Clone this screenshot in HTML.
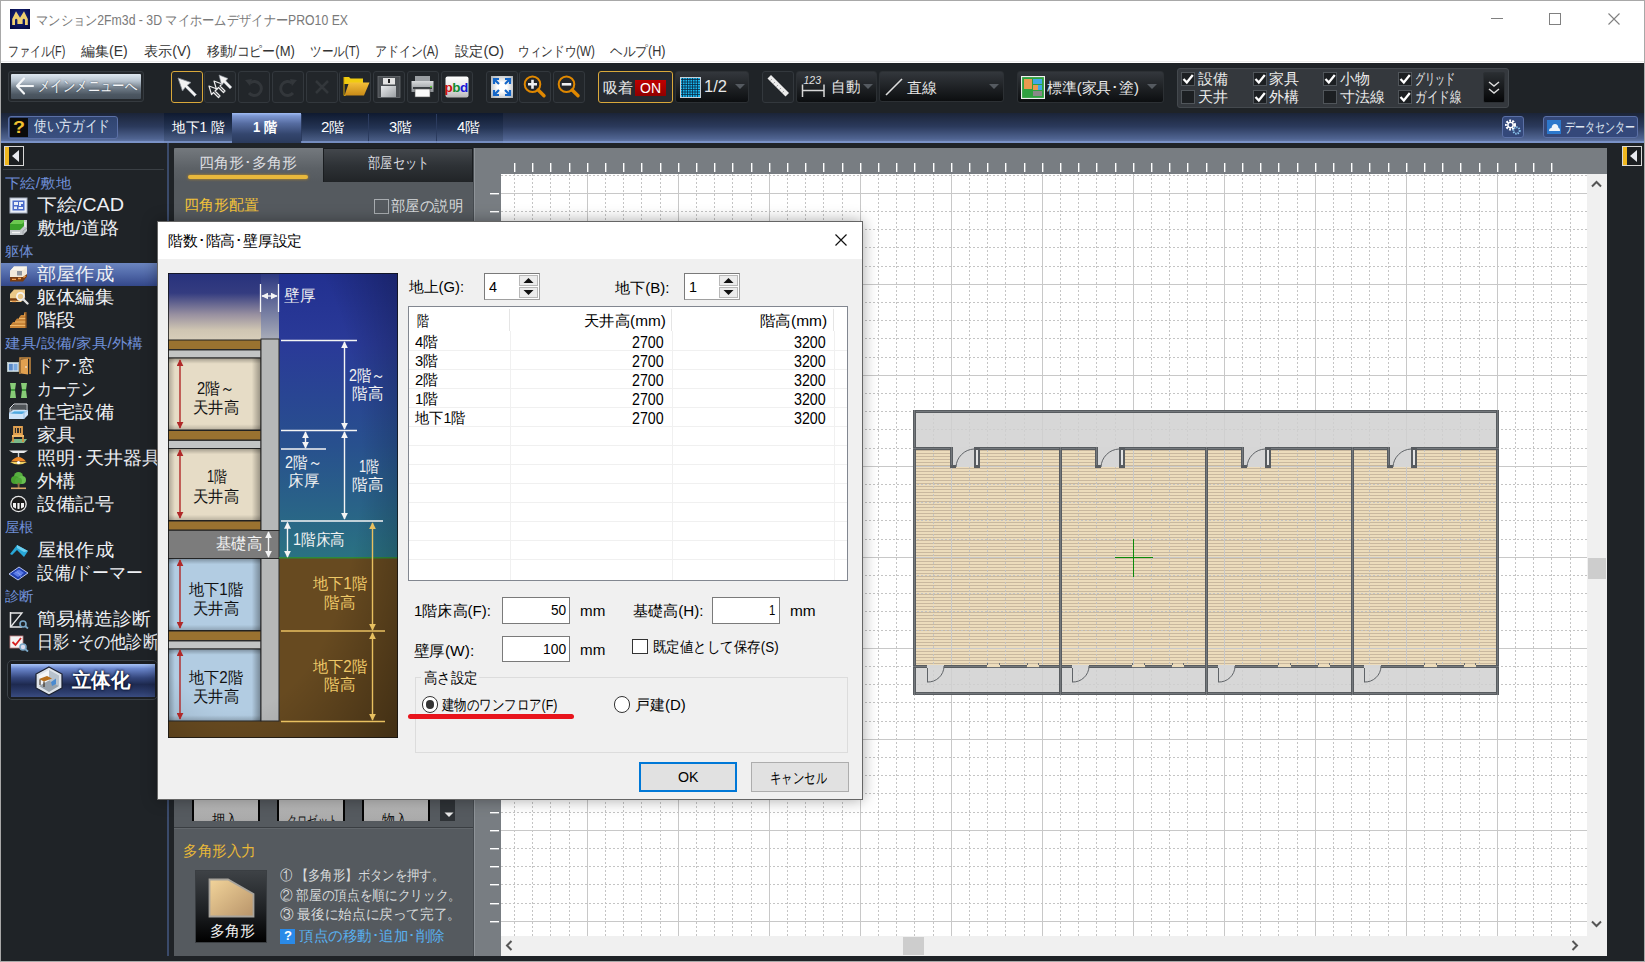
<!DOCTYPE html><html><head><meta charset="utf-8"><style>
html,body{margin:0;padding:0;}
body{width:1645px;height:962px;position:relative;overflow:hidden;background:#1f2327;font-family:"Liberation Sans",sans-serif;}
body div, body svg{position:absolute;box-sizing:border-box;}
.f{white-space:nowrap;transform-origin:0 50%;}
</style></head><body><div style="left:0px;top:0px;width:1645px;height:63px;background:#fff;"></div>
<div style="left:1px;top:61px;width:1643px;height:1px;background:#ececec;"></div>
<svg style="left:10px;top:9px;" width="20" height="20" viewBox="0 0 20 20"><defs><radialGradient id="ig" cx="0.5" cy="0.4" r="0.7"><stop offset="0" stop-color="#1a2a90"></stop><stop offset="1" stop-color="#050a40"></stop></radialGradient></defs><rect width="20" height="20" fill="url(#ig)"></rect><path d="M2.2 16 V10 L6 2.3 L10 8.8 L14 2.3 L17.8 10 V16 H15 V10.8 Q13.8 8.6 12.6 10.8 V15 H7.4 V10.8 Q6.2 8.6 5 10.8 V16 Z" fill="#f0d070"></path></svg>
<div class="f" style="left: 35.5px; top: 12.5px; font-size: 14px; line-height: 14px; color: rgb(122, 122, 122); --w: 312px; transform: scaleX(0.8757);">マンション2Fm3d - 3D マイホームデザイナーPRO10 EX</div>
<div style="left:1491px;top:18px;width:12px;height:1px;background:#808080;"></div>
<div style="left:1549px;top:13px;width:12px;height:12px;border:1px solid #808080;"></div>
<svg style="left:1608px;top:13px;" width="12" height="12" viewBox="0 0 12 12"><path d="M0.5 0.5 L11.5 11.5 M11.5 0.5 L0.5 11.5" stroke="#808080" stroke-width="1.1"></path></svg>
<div class="f" style="left: 8.3px; top: 43.7px; font-size: 14px; line-height: 14px; color: rgb(51, 51, 51); --w: 57.4px; transform: scaleX(0.7768);">ファイル(F)</div>
<div class="f" style="left: 81.2px; top: 43.7px; font-size: 14px; line-height: 14px; color: rgb(51, 51, 51); --w: 46.8px; transform: scaleX(1.0027);">編集(E)</div>
<div class="f" style="left: 143.6px; top: 43.7px; font-size: 14px; line-height: 14px; color: rgb(51, 51, 51); --w: 47px; transform: scaleX(1.007);">表示(V)</div>
<div class="f" style="left: 206.6px; top: 43.7px; font-size: 14px; line-height: 14px; color: rgb(51, 51, 51); --w: 87.8px; transform: scaleX(0.9253);">移動/コピー(M)</div>
<div class="f" style="left: 310.4px; top: 43.7px; font-size: 14px; line-height: 14px; color: rgb(51, 51, 51); --w: 49.6px; transform: scaleX(0.8282);">ツール(T)</div>
<div class="f" style="left: 375px; top: 43.7px; font-size: 14px; line-height: 14px; color: rgb(51, 51, 51); --w: 63.6px; transform: scaleX(0.8517);">アドイン(A)</div>
<div class="f" style="left: 454.7px; top: 43.7px; font-size: 14px; line-height: 14px; color: rgb(51, 51, 51); --w: 49px; transform: scaleX(1.0162);">設定(O)</div>
<div class="f" style="left: 518px; top: 43.7px; font-size: 14px; line-height: 14px; color: rgb(51, 51, 51); --w: 77px; transform: scaleX(0.832);">ウィンドウ(W)</div>
<div class="f" style="left: 609.5px; top: 43.7px; font-size: 14px; line-height: 14px; color: rgb(51, 51, 51); --w: 55.5px; transform: scaleX(0.9034);">ヘルプ(H)</div>
<div style="left:8px;top:71px;width:136px;height:31px;border:1px solid #353a3f;border-radius:3px;background:#23272b;"></div>
<div style="left:11px;top:74px;width:130px;height:25px;background:linear-gradient(#dee7ef 0%,#b6c2ce 28%,#6e7a86 58%,#4c5762 82%,#46505a 100%);border-radius:1px;"></div>
<svg style="left:14px;top:75px;" width="21" height="23" viewBox="0 0 21 23"><path d="M19 11 H3 M10 3.5 L3 11 L10 18.5" stroke="#f4f6f8" stroke-width="2.2" fill="none" stroke-linecap="round" stroke-linejoin="round"></path></svg>
<div class="f" style="left: 37.5px; top: 78px; font-size: 15px; line-height: 15px; color: rgb(245, 247, 250); --w: 99px; text-shadow: rgb(58, 68, 80) 0px 0px 2px; transform: scaleX(0.825);">メインメニューへ</div>
<div style="left:171px;top:71px;width:32px;height:32px;border:1.5px solid #d9a83a;border-radius:3px;background:#22262a;"></div>
<div style="left:204px;top:71px;width:32px;height:32px;border:1px solid #33383d;border-radius:3px;background:#22262a;"></div>
<div style="left:238px;top:71px;width:32px;height:32px;border:1px solid #33383d;border-radius:3px;background:#22262a;"></div>
<div style="left:272px;top:71px;width:32px;height:32px;border:1px solid #33383d;border-radius:3px;background:#22262a;"></div>
<div style="left:306px;top:71px;width:32px;height:32px;border:1px solid #33383d;border-radius:3px;background:#22262a;"></div>
<div style="left:339px;top:71px;width:32px;height:32px;border:1px solid #33383d;border-radius:3px;background:#22262a;"></div>
<div style="left:373px;top:71px;width:32px;height:32px;border:1px solid #33383d;border-radius:3px;background:#22262a;"></div>
<div style="left:407px;top:71px;width:32px;height:32px;border:1px solid #33383d;border-radius:3px;background:#22262a;"></div>
<div style="left:441px;top:71px;width:32px;height:32px;border:1px solid #33383d;border-radius:3px;background:#22262a;"></div>
<svg style="left:175px;top:75px;" width="25" height="25" viewBox="0 0 25 25"><path d="M3 3 L16 7.5 L12.3 10.2 L21.5 19.5 L19.5 21.5 L10.2 12.3 L7.5 16 Z" fill="#f2f2f2" stroke="#8a9098" stroke-width="0.8" stroke-linejoin="round"></path></svg>
<svg style="left:207px;top:73px;" width="28" height="28" viewBox="0 0 28 28"><g fill="none" stroke="#eee" stroke-width="1.2" stroke-linejoin="round"><path d="M2 13 L10 16 L8 18 L13 23 L11.5 24.5 L6.5 19.5 L4.5 21.5Z"></path><path d="M7 8 L15 11 L13 13 L18 18 L16.5 19.5 L11.5 14.5 L9.5 16.5Z"></path></g><path d="M12 2 L21 5.5 L18.8 7.7 L25 14 L23 16 L16.8 9.7 L14.6 12 Z" fill="#f2f2f2" stroke="#8a9098" stroke-width="0.6"></path></svg>
<svg style="left:242px;top:75px;" width="24" height="24" viewBox="0 0 24 24"><path d="M8 8 A7 7 0 1 1 7 18" stroke="#33373b" stroke-width="3" fill="none"></path><path d="M3 5 L10 4 L8 11Z" fill="#33373b"></path></svg>
<svg style="left:276px;top:75px;" width="24" height="24" viewBox="0 0 24 24"><path d="M16 8 A7 7 0 1 0 17 18" stroke="#33373b" stroke-width="3" fill="none"></path><path d="M21 5 L14 4 L16 11Z" fill="#33373b"></path></svg>
<svg style="left:310px;top:75px;" width="24" height="24" viewBox="0 0 24 24"><path d="M6 6 L18 18 M18 6 L6 18" stroke="#33373b" stroke-width="2.5"></path></svg>
<svg style="left:343px;top:76px;" width="27" height="21" viewBox="0 0 27 21"><defs><linearGradient id="fo" x1="0" y1="0" x2="0" y2="1"><stop offset="0" stop-color="#f4c038"></stop><stop offset="1" stop-color="#c88a18"></stop></linearGradient></defs><path d="M1 1 H6 L7.5 2.5 H20 V8 H1Z" fill="#f0cc10"></path><path d="M1 1 V19.5 L3 19" stroke="#d8a800" stroke-width="1" fill="none"></path><path d="M6 6.5 H26.5 L21 19.5 H1.5Z" fill="url(#fo)"></path></svg>
<svg style="left:377px;top:76px;" width="24" height="22" viewBox="0 0 24 22"><defs><linearGradient id="dk" x1="0" y1="0" x2="1" y2="1"><stop offset="0" stop-color="#e8eaec"></stop><stop offset="1" stop-color="#9ca0a4"></stop></linearGradient></defs><rect x="1" y="0.5" width="22" height="21" fill="#4a4e52" stroke="#6a6e72" stroke-width="0.8"></rect><rect x="6" y="2" width="12" height="6.5" fill="#e4e4e4"></rect><rect x="11" y="3" width="2" height="4" fill="#222"></rect><rect x="4" y="10" width="15" height="11" fill="url(#dk)"></rect></svg>
<svg style="left:411px;top:75px;" width="24" height="23" viewBox="0 0 24 23"><defs><linearGradient id="pr" x1="0" y1="0" x2="0" y2="1"><stop offset="0" stop-color="#d8dadc"></stop><stop offset="1" stop-color="#8a8e92"></stop></linearGradient></defs><rect x="4" y="1" width="15" height="6" fill="#9a9ea2"></rect><rect x="0.5" y="6" width="22" height="11" fill="url(#pr)"></rect><rect x="2" y="12" width="19" height="2" fill="#3a3e42"></rect><rect x="4" y="14" width="15" height="8" fill="#fafafa" stroke="#555" stroke-width="0.6"></rect><rect x="19" y="11" width="2" height="1.5" fill="#6c4"></rect></svg>
<svg style="left:445px;top:76px;" width="24" height="22" viewBox="0 0 24 22"><defs><linearGradient id="pb" x1="0" y1="0" x2="0" y2="1"><stop offset="0" stop-color="#ffffff"></stop><stop offset="0.6" stop-color="#e0e0e0"></stop><stop offset="1" stop-color="#b8b8b8"></stop></linearGradient></defs><rect x="0.5" y="0.5" width="23" height="21" rx="2" fill="url(#pb)"></rect><text x="-0.5" y="15.5" font-family="Liberation Sans" font-weight="bold" font-size="13.5" fill="#d01010">p</text><text x="7.2" y="15.5" font-family="Liberation Sans" font-weight="bold" font-size="13.5" fill="#108a30">b</text><text x="15" y="15.5" font-family="Liberation Sans" font-weight="bold" font-size="13.5" fill="#1818d8">d</text></svg>
<div style="left:486px;top:71px;width:32px;height:32px;border:1px solid #33383d;border-radius:3px;background:#22262a;"></div>
<div style="left:519px;top:71px;width:32px;height:32px;border:1px solid #33383d;border-radius:3px;background:#22262a;"></div>
<div style="left:553px;top:71px;width:32px;height:32px;border:1px solid #33383d;border-radius:3px;background:#22262a;"></div>
<svg style="left:490px;top:75px;" width="24" height="24" viewBox="0 0 24 24"><defs><radialGradient id="fg" cx="0.5" cy="0.5" r="0.7"><stop offset="0.3" stop-color="#ffffff"></stop><stop offset="1" stop-color="#a8acb0"></stop></radialGradient></defs><rect x="1" y="1" width="22" height="22" fill="url(#fg)"></rect><g stroke="#1466c8" stroke-width="2.2" fill="none"><path d="M4 9 V4 H9 M4 4 L9 9"></path><path d="M15 4 H20 V9 M20 4 L15 9"></path><path d="M4 15 V20 H9 M4 20 L9 15"></path><path d="M20 15 V20 H15 M20 20 L15 15"></path></g></svg>
<svg style="left:523px;top:75px;" width="24" height="24" viewBox="0 0 24 24"><circle cx="9.5" cy="9.3" r="7.8" fill="none" stroke="#e08800" stroke-width="2"></circle><path d="M5 9.3 H14 M9.5 4.8 V13.8" stroke="#eef0f2" stroke-width="2.6"></path><path d="M15.2 15 L21 20.8" stroke="#e08800" stroke-width="3.4" stroke-linecap="round"></path></svg>
<svg style="left:557px;top:75px;" width="24" height="24" viewBox="0 0 24 24"><circle cx="9.5" cy="9.3" r="7.8" fill="none" stroke="#e08800" stroke-width="2"></circle><path d="M4.8 9.3 H14.2" stroke="#eef0f2" stroke-width="2.6"></path><path d="M15.2 15 L21 20.8" stroke="#e08800" stroke-width="3.4" stroke-linecap="round"></path></svg>
<div style="left:598px;top:71px;width:75px;height:32px;border:1.5px solid #d9a83a;border-radius:3px;background:#262a30;"></div>
<div class="f" style="left: 603px; top: 80px; font-size: 15px; line-height: 15px; color: rgb(232, 232, 232); --w: 30px; transform: scaleX(1);">吸着</div>
<div style="left:635px;top:79.5px;width:31px;height:16px;background:linear-gradient(#c00000,#900000);"></div>
<div class="f" style="left: 640px; top: 80px; font-size: 15px; line-height: 15px; color: rgb(255, 255, 255); --w: 21px; transform: scaleX(0.9333);">ON</div>
<div style="left:675px;top:71px;width:74px;height:32px;border:1px solid #2c3034;border-radius:3px;background:linear-gradient(#33373c,#0c0e10);"></div>
<svg style="left:680px;top:77px;" width="21" height="21" viewBox="0 0 21 21"><rect x="0.5" y="0.5" width="20" height="20" fill="#18b8f0" stroke="#c8d0d8" stroke-width="1"></rect><g stroke="#0a2a44" stroke-width="0.8"><path d="M2.5 1 V20 M1 2.5 H20"></path><path d="M5.0 1 V20 M1 5.0 H20"></path><path d="M7.5 1 V20 M1 7.5 H20"></path><path d="M10.0 1 V20 M1 10.0 H20"></path><path d="M12.5 1 V20 M1 12.5 H20"></path><path d="M15.0 1 V20 M1 15.0 H20"></path><path d="M17.5 1 V20 M1 17.5 H20"></path></g></svg>
<div class="f" style="left: 704px; top: 79px; font-size: 16px; line-height: 16px; color: rgb(232, 232, 232); --w: 23px; transform: scaleX(1.0337);">1/2</div>
<svg style="left:734px;top:83px;" width="12" height="8" viewBox="0 0 12 8"><path d="M1 1 H11 L6 6Z" fill="#555a60"></path></svg>
<div style="left:762px;top:71px;width:32px;height:32px;border:1px solid #33383d;border-radius:3px;background:#22262a;"></div>
<svg style="left:766px;top:74px;" width="25" height="25" viewBox="0 0 25 25"><path d="M1.5 4.5 L5 1 L23 19 L19.5 22.5 Z" fill="#ececec"></path><g stroke="#9a9a9a" stroke-width="0.9"><path d="M4.5 6.5 L6 5 M7.5 9.5 L9 8 M10.5 12.5 L12 11 M13.5 15.5 L15 14 M16.5 18.5 L18 17"></path></g></svg>
<div style="left:796px;top:71px;width:81px;height:32px;border:1px solid #2c3034;border-radius:3px;background:linear-gradient(#33373c,#0c0e10);"></div>
<svg style="left:800px;top:74px;" width="27" height="26" viewBox="0 0 27 26"><text x="3.5" y="10" font-family="Liberation Sans" font-style="italic" font-size="10.5" fill="#e0e0e0">123</text><path d="M2.5 10.5 V23 M24 10.5 V23 M2.5 16.5 H24" stroke="#d8d8d8" stroke-width="1.5"></path></svg>
<div class="f" style="left: 831px; top: 78.5px; font-size: 15px; line-height: 15px; color: rgb(232, 232, 232); --w: 29px; transform: scaleX(0.9667);">自動</div>
<svg style="left:862px;top:83px;" width="12" height="8" viewBox="0 0 12 8"><path d="M1 1 H11 L6 6Z" fill="#555a60"></path></svg>
<div style="left:879px;top:71px;width:125px;height:31px;border:1px solid #2c3034;border-radius:3px;background:linear-gradient(#33373c,#0c0e10);"></div>
<svg style="left:884px;top:78px;" width="20" height="18" viewBox="0 0 20 18"><path d="M2 17 L18 1" stroke="#ddd" stroke-width="1.6"></path></svg>
<div class="f" style="left: 907px; top: 79.5px; font-size: 15px; line-height: 15px; color: rgb(232, 232, 232); --w: 30px; transform: scaleX(1);">直線</div>
<svg style="left:988px;top:83px;" width="12" height="8" viewBox="0 0 12 8"><path d="M1 1 H11 L6 6Z" fill="#555a60"></path></svg>
<div style="left:1017px;top:71px;width:147px;height:32px;border:1px solid #2c3034;border-radius:3px;background:linear-gradient(#33373c,#0c0e10);"></div>
<svg style="left:1021px;top:76px;" width="24" height="23" viewBox="0 0 24 23"><rect x="0.5" y="0.5" width="23" height="22" fill="#2fa040" stroke="#f0f0f0" stroke-width="1.2"></rect><rect x="3" y="3" width="8" height="10" fill="#e89a50"></rect><rect x="12" y="3" width="9" height="5" fill="#40a8e8"></rect><rect x="12" y="9" width="5" height="5" fill="#e89a50"></rect><rect x="17" y="9" width="4" height="5" fill="#40a8e8"></rect><rect x="12" y="15" width="9" height="5" fill="#888"></rect><rect x="3" y="15" width="8" height="5" fill="#2fa040"></rect></svg>
<div class="f" style="left: 1047px; top: 79.5px; font-size: 15px; line-height: 15px; color: rgb(232, 232, 232); --w: 92px; transform: scaleX(0.9892);">標準(家具･塗)</div>
<svg style="left:1146px;top:83px;" width="12" height="8" viewBox="0 0 12 8"><path d="M1 1 H11 L6 6Z" fill="#555a60"></path></svg>
<div style="left:1177px;top:68px;width:332px;height:40px;border:1px solid #44494e;border-radius:3px;background:#34383d;"></div>
<div style="left:1181px;top:71.5px;width:14px;height:14px;border:1px solid #50555a;background:#1c1f22;"></div>
<svg style="left:1181px;top:71.5px;" width="14" height="14" viewBox="0 0 14 14"><path d="M2.5 7 L5.8 10.5 L11.8 3" stroke="#fff" stroke-width="2.3" fill="none"></path></svg>
<div class="f" style="left: 1197.5px; top: 71px; font-size: 15px; line-height: 15px; color: rgb(234, 234, 234); --w: 30px; transform: scaleX(1);">設備</div>
<div style="left:1181px;top:89.5px;width:14px;height:14px;border:1px solid #50555a;background:#1c1f22;"></div>
<div class="f" style="left: 1197.5px; top: 89px; font-size: 15px; line-height: 15px; color: rgb(234, 234, 234); --w: 30px; transform: scaleX(1);">天井</div>
<div style="left:1252.5px;top:71.5px;width:14px;height:14px;border:1px solid #50555a;background:#1c1f22;"></div>
<svg style="left:1252.5px;top:71.5px;" width="14" height="14" viewBox="0 0 14 14"><path d="M2.5 7 L5.8 10.5 L11.8 3" stroke="#fff" stroke-width="2.3" fill="none"></path></svg>
<div class="f" style="left: 1269px; top: 71px; font-size: 15px; line-height: 15px; color: rgb(234, 234, 234); --w: 30px; transform: scaleX(1);">家具</div>
<div style="left:1252.5px;top:89.5px;width:14px;height:14px;border:1px solid #50555a;background:#1c1f22;"></div>
<svg style="left:1252.5px;top:89.5px;" width="14" height="14" viewBox="0 0 14 14"><path d="M2.5 7 L5.8 10.5 L11.8 3" stroke="#fff" stroke-width="2.3" fill="none"></path></svg>
<div class="f" style="left: 1269px; top: 89px; font-size: 15px; line-height: 15px; color: rgb(234, 234, 234); --w: 30px; transform: scaleX(1);">外構</div>
<div style="left:1323px;top:71.5px;width:14px;height:14px;border:1px solid #50555a;background:#1c1f22;"></div>
<svg style="left:1323px;top:71.5px;" width="14" height="14" viewBox="0 0 14 14"><path d="M2.5 7 L5.8 10.5 L11.8 3" stroke="#fff" stroke-width="2.3" fill="none"></path></svg>
<div class="f" style="left: 1340px; top: 71px; font-size: 15px; line-height: 15px; color: rgb(234, 234, 234); --w: 30px; transform: scaleX(1);">小物</div>
<div style="left:1323px;top:89.5px;width:14px;height:14px;border:1px solid #50555a;background:#1c1f22;"></div>
<div class="f" style="left: 1340px; top: 89px; font-size: 15px; line-height: 15px; color: rgb(234, 234, 234); --w: 45px; transform: scaleX(1);">寸法線</div>
<div style="left:1398px;top:71.5px;width:14px;height:14px;border:1px solid #50555a;background:#1c1f22;"></div>
<svg style="left:1398px;top:71.5px;" width="14" height="14" viewBox="0 0 14 14"><path d="M2.5 7 L5.8 10.5 L11.8 3" stroke="#fff" stroke-width="2.3" fill="none"></path></svg>
<div class="f" style="left: 1414.5px; top: 71px; font-size: 15px; line-height: 15px; color: rgb(234, 234, 234); --w: 40px; transform: scaleX(0.6667);">グリッド</div>
<div style="left:1398px;top:89.5px;width:14px;height:14px;border:1px solid #50555a;background:#1c1f22;"></div>
<svg style="left:1398px;top:89.5px;" width="14" height="14" viewBox="0 0 14 14"><path d="M2.5 7 L5.8 10.5 L11.8 3" stroke="#fff" stroke-width="2.3" fill="none"></path></svg>
<div class="f" style="left: 1414.5px; top: 89px; font-size: 15px; line-height: 15px; color: rgb(234, 234, 234); --w: 46px; transform: scaleX(0.7667);">ガイド線</div>
<div style="left:1483px;top:72px;width:22px;height:31px;border:1px solid #2c3034;border-radius:2px;background:linear-gradient(#2a2e32,#050607);"></div>
<svg style="left:1487px;top:80px;" width="14" height="16" viewBox="0 0 14 16"><path d="M2 2 L7 6 L12 2 M2 9 L7 13 L12 9" stroke="#ddd" stroke-width="1.5" fill="none"></path></svg>
<div style="left:1px;top:113px;width:1643px;height:30px;background:linear-gradient(#1b2438 0%,#2b3a5c 45%,#4f6390 85%,#6b80b0 100%);"></div>
<div style="left:8px;top:116px;width:110px;height:23px;border:1px solid #5b70a6;border-radius:3px;background:linear-gradient(#304470,#3a5080);"></div>
<div style="left:10px;top:118px;width:18px;height:19px;background:#0a0a0a;"></div>
<div class="f" style="left: 12.5px; top: 119px; font-size: 17px; line-height: 17px; color: rgb(240, 192, 48); --w: 12px; font-weight: bold; transform: scaleX(1.1549);">?</div>
<div class="f" style="left: 34px; top: 117.9px; font-size: 15px; line-height: 15px; color: rgb(223, 230, 242); --w: 76px; transform: scaleX(0.8444);">使い方ガイド</div>
<div style="left:164px;top:113px;width:339px;height:30px;background:linear-gradient(#0f1a30 0%,#243454 50%,#51658f 100%);"></div>
<div style="left:232px;top:114px;width:1px;height:29px;background:#2b3b5e;"></div>
<div style="left:301px;top:114px;width:1px;height:29px;background:#2b3b5e;"></div>
<div style="left:368px;top:114px;width:1px;height:29px;background:#2b3b5e;"></div>
<div style="left:436px;top:114px;width:1px;height:29px;background:#2b3b5e;"></div>
<div style="left:1px;top:141px;width:1643px;height:1.5px;background:rgba(130,155,210,0.75);"></div>
<div style="left:232px;top:113px;width:69px;height:30px;background:linear-gradient(#a0bcf4 0px,#7c96d0 3px,#566ca0 35%,#34466e 70%,#2a3a5c 100%);"></div>
<div class="f" style="left: 171.5px; top: 119.5px; font-size: 14px; line-height: 14px; color: rgb(255, 255, 255); --w: 52.5px; transform: scaleX(0.9779);">地下1 階</div>
<div class="f" style="left: 253px; top: 119.5px; font-size: 14px; line-height: 14px; color: rgb(255, 255, 255); --w: 24px; font-weight: bold; transform: scaleX(0.9343);">1 階</div>
<div class="f" style="left: 321px; top: 119.5px; font-size: 14px; line-height: 14px; color: rgb(255, 255, 255); --w: 23.7px; transform: scaleX(1.0873);">2階</div>
<div class="f" style="left: 389px; top: 119.5px; font-size: 14px; line-height: 14px; color: rgb(255, 255, 255); --w: 23px; transform: scaleX(1.0552);">3階</div>
<div class="f" style="left: 457px; top: 119.5px; font-size: 14px; line-height: 14px; color: rgb(255, 255, 255); --w: 23px; transform: scaleX(1.0552);">4階</div>
<div style="left:1502px;top:116px;width:22px;height:22px;border:1px solid #5b70a6;border-radius:3px;background:#34487a;"></div>
<svg style="left:1504px;top:118px;" width="18" height="18" viewBox="0 0 18 18"><circle cx="6.5" cy="7" r="4.2" fill="none" stroke="#fff" stroke-width="2.6" stroke-dasharray="1.8 1.2"></circle><circle cx="6.5" cy="7" r="2.6" fill="none" stroke="#fff" stroke-width="1.4"></circle><circle cx="12.5" cy="12.5" r="3.2" fill="none" stroke="#8cc8f0" stroke-width="2" stroke-dasharray="1.4 1"></circle></svg>
<div style="left:1543px;top:116px;width:95px;height:22px;border:1px solid #5b70a6;border-radius:3px;background:#34487a;"></div>
<div style="left:1547px;top:120px;width:14px;height:14px;background:#2c78cc;"></div>
<svg style="left:1547px;top:120px;" width="14" height="14" viewBox="0 0 14 14"><path d="M2 11 Q2 8 4.5 8 Q5 4 8 4 Q11 4 11.5 8 Q13 8 13 11Z" fill="#eef4fa"></path></svg>
<div class="f" style="left: 1565px; top: 120px; font-size: 14px; line-height: 14px; color: rgb(223, 230, 242); --w: 70px; transform: scaleX(0.7143);">データセンター</div>
<div style="left:1px;top:143px;width:166px;height:813px;background:#1f2327;"></div>
<div style="left:167px;top:143px;width:2px;height:813px;background:#3a4a6a;"></div>
<div style="left:4px;top:146px;width:20px;height:20px;border:1px solid #d8d8d8;background:#1c1f22;"></div>
<div style="left:5px;top:147px;width:4px;height:18px;background:#f0b820;"></div>
<svg style="left:11px;top:149px;" width="10" height="14" viewBox="0 0 10 14"><path d="M8 1 L1 7 L8 13Z" fill="#e8eaf0"></path></svg>
<div style="left:3px;top:169px;width:161px;height:1px;background:#3a3f44;"></div>
<div class="f" style="left: 5px; top: 175.7px; font-size: 14px; line-height: 14px; color: rgb(111, 143, 216); --w: 66px; transform: scaleX(1.102);">下絵/敷地</div>
<div class="f" style="left: 36.8px; top: 196px; font-size: 18px; line-height: 18px; color: rgb(238, 240, 244); --w: 87px; transform: scaleX(1.101);">下絵/CAD</div>
<div class="f" style="left: 36.8px; top: 219px; font-size: 18px; line-height: 18px; color: rgb(238, 240, 244); --w: 82px; transform: scaleX(1.0647);">敷地/道路</div>
<div class="f" style="left: 5px; top: 244px; font-size: 14px; line-height: 14px; color: rgb(111, 143, 216); --w: 29px; transform: scaleX(1.0357);">躯体</div>
<div style="left:1px;top:263px;width:157px;height:23px;background:linear-gradient(#6c86c0 0%,#5068a8 50%,#34488a 100%);"></div>
<div class="f" style="left: 36.8px; top: 265px; font-size: 18px; line-height: 18px; color: rgb(238, 240, 244); --w: 77px; transform: scaleX(1.0694);">部屋作成</div>
<div class="f" style="left: 36.8px; top: 288px; font-size: 18px; line-height: 18px; color: rgb(238, 240, 244); --w: 77px; transform: scaleX(1.0694);">躯体編集</div>
<div class="f" style="left: 36.8px; top: 311px; font-size: 18px; line-height: 18px; color: rgb(238, 240, 244); --w: 39px; transform: scaleX(1.0833);">階段</div>
<div class="f" style="left: 5px; top: 336px; font-size: 14px; line-height: 14px; color: rgb(111, 143, 216); --w: 138px; transform: scaleX(1.1159);">建具/設備/家具/外構</div>
<div class="f" style="left: 36.8px; top: 357px; font-size: 18px; line-height: 18px; color: rgb(238, 240, 244); --w: 58px; transform: scaleX(0.9206);">ドア･窓</div>
<div class="f" style="left: 36.8px; top: 380px; font-size: 18px; line-height: 18px; color: rgb(238, 240, 244); --w: 59px; transform: scaleX(0.8194);">カーテン</div>
<div class="f" style="left: 36.8px; top: 403px; font-size: 18px; line-height: 18px; color: rgb(238, 240, 244); --w: 77px; transform: scaleX(1.0694);">住宅設備</div>
<div class="f" style="left: 36.8px; top: 426px; font-size: 18px; line-height: 18px; color: rgb(238, 240, 244); --w: 39px; transform: scaleX(1.0833);">家具</div>
<div class="f" style="left: 36.8px; top: 449px; font-size: 18px; line-height: 18px; color: rgb(238, 240, 244); --w: 124px; transform: scaleX(1.0598);">照明･天井器具</div>
<div class="f" style="left: 36.8px; top: 472px; font-size: 18px; line-height: 18px; color: rgb(238, 240, 244); --w: 39px; transform: scaleX(1.0833);">外構</div>
<div class="f" style="left: 36.8px; top: 495px; font-size: 18px; line-height: 18px; color: rgb(238, 240, 244); --w: 77px; transform: scaleX(1.0694);">設備記号</div>
<div class="f" style="left: 5px; top: 520px; font-size: 14px; line-height: 14px; color: rgb(111, 143, 216); --w: 29px; transform: scaleX(1.0357);">屋根</div>
<div class="f" style="left: 36.8px; top: 541px; font-size: 18px; line-height: 18px; color: rgb(238, 240, 244); --w: 77px; transform: scaleX(1.0694);">屋根作成</div>
<div class="f" style="left: 36.8px; top: 564px; font-size: 18px; line-height: 18px; color: rgb(238, 240, 244); --w: 106px; transform: scaleX(0.9379);">設備/ドーマー</div>
<div class="f" style="left: 5px; top: 589px; font-size: 14px; line-height: 14px; color: rgb(111, 143, 216); --w: 29px; transform: scaleX(1.0357);">診断</div>
<div class="f" style="left: 36.8px; top: 610px; font-size: 18px; line-height: 18px; color: rgb(238, 240, 244); --w: 114px; transform: scaleX(1.0556);">簡易構造診断</div>
<div class="f" style="left: 36.8px; top: 633px; font-size: 18px; line-height: 18px; color: rgb(238, 240, 244); --w: 122px; transform: scaleX(0.9037);">日影･その他診断</div>
<svg style="left:9px;top:197px;" width="19" height="17" viewBox="0 0 19 17"><rect x="1" y="1" width="17" height="15" fill="#e8eef8" stroke="#a8b0c0" stroke-width="1"></rect><rect x="3.5" y="3.5" width="12" height="10" fill="#4a6ac8"></rect><path d="M5 5 H9 V8 H5Z M10 5 H14 V7 H12 V9 H10Z M5 9.5 H8 V12 H5Z M9.5 10 H14 V12 H9.5Z" fill="#e8eef8"></path></svg>
<svg style="left:9px;top:219px;" width="19" height="17" viewBox="0 0 19 17"><path d="M1 5 L5 1 H18 V12 L14 16 H1Z" fill="#c4c8cc"></path><path d="M1 5 L5 1 H15 V7 L11 11 H1Z" fill="#3aa02a"></path><path d="M5 1 H15 V3 L13 5 H1Z" fill="#6cc850"></path><rect x="15.5" y="3" width="1.2" height="5" fill="#f4f4f4"></rect><path d="M3 13.5 H11" stroke="#f4f4f4" stroke-width="1.3"></path><path d="M14 16 V12 L18 9" stroke="#a0a4a8" fill="none"></path></svg>
<svg style="left:9px;top:265px;" width="19" height="18" viewBox="0 0 19 18"><path d="M1 6 L5 1.5 H18 V11 L14 15 H1Z" fill="#f2ead8"></path><path d="M1 6 L5 1.5 H18 L14 5 H1Z" fill="#faf6ec"></path><rect x="8" y="6" width="5" height="4.5" fill="#90959a"></rect><path d="M1 12 H14 L18 9 V11.5 L14 16.5 H1Z" fill="#7a3e10"></path><path d="M3 14.3 H7 M9 13.5 H12 M14.5 12.5 L16.5 11" stroke="#f0a050" stroke-width="1.3"></path></svg>
<svg style="left:9px;top:288px;" width="20" height="18" viewBox="0 0 20 18"><path d="M1 6 L5 1.5 H16 V10 L12 14 H1Z" fill="#ecc888"></path><path d="M1 11.5 H12 L16 8.5" stroke="#7a3e10" stroke-width="2.4" fill="none"></path><path d="M3 13.5 H7" stroke="#f0a050" stroke-width="1.2"></path><circle cx="11.5" cy="8.5" r="3.6" fill="#ecc888" stroke="#f4f4f4" stroke-width="1.7"></circle><path d="M14 11 L18.5 15.5" stroke="#e0e0e0" stroke-width="2.4" stroke-linecap="round"></path></svg>
<svg style="left:9px;top:311px;" width="19" height="18" viewBox="0 0 19 18"><path d="M17 1 L15 1.5 V4 H12 L10 6.5 V7.5 H8 L6 10 V11 H4 L2 13.5 V14.5 H1 L1 17 H17Z" fill="#c88438"></path><path d="M15 4 H17 M10 7.5 H17 M6 11 H17 M1 14.5 H17" stroke="#f0b868" stroke-width="1"></path><path d="M17 1 V17" stroke="#8a5420" stroke-width="1.4"></path></svg>
<svg style="left:7px;top:357px;" width="24" height="18" viewBox="0 0 24 18"><rect x="0.5" y="5.5" width="11" height="9" fill="#dde6f0" stroke="#bcc" stroke-width="0.8"></rect><rect x="1.8" y="6.8" width="4" height="6.6" fill="#5a8ac8"></rect><rect x="6.5" y="6.8" width="4" height="6.6" fill="#7aaae0"></rect><path d="M13 17 V1 H23 V17" fill="none" stroke="#c88a40" stroke-width="1.5"></path><path d="M14 16.5 V2.5 L21 1.5 V17.5Z" fill="#e0a050"></path><circle cx="19" cy="10" r="0.8" fill="#fff"></circle></svg>
<svg style="left:9px;top:382px;" width="19" height="17" viewBox="0 0 19 17"><path d="M1 1 H7 L6 8 L7 16 H1 L2 8Z M12 1 H18 L17 8 L18 16 H12 L13 8Z" fill="#88cc78"></path><path d="M2 8 L6 8 M13 8 L17 8" stroke="#2a8a2a" stroke-width="1.6"></path></svg>
<svg style="left:8px;top:402px;" width="21" height="19" viewBox="0 0 21 19"><path d="M2 6 L6 2 H19 V9 L15 13 H2Z" fill="none" stroke="#e0e4e8" stroke-width="1"></path><path d="M3 5 V11 M5 4 V11 M7 3 V11 M9 2.5 V11 M11 2.5 V11 M13 2.5 V11 M15 2.5 V11 M17 2.5 V10 M2 8 H17" stroke="#c8ccd0" stroke-width="0.6"></path><path d="M1 11 L5 8 H20 V13 L16 17 H1Z" fill="#cfe4f8"></path><path d="M3 11.5 L6 9.5 H17 L14 12Z" fill="#2aa0e0"></path><path d="M1 11 H16 L20 8 M16 11 V17" stroke="#8ab8e0" fill="none" stroke-width="0.8"></path></svg>
<svg style="left:9px;top:426px;" width="19" height="18" viewBox="0 0 19 18"><path d="M1 17 L4 13 H18 L15 17Z" fill="#7ab888"></path><path d="M5 1 H13 V8 H5Z" fill="none" stroke="#e0a050" stroke-width="1.8"></path><path d="M7.5 2 V8 M10.5 2 V8" stroke="#e0a050" stroke-width="1.2"></path><path d="M3 9 H15 V11 H3Z" fill="#f0b868"></path><path d="M4 11 V16 M14 11 V16" stroke="#d09040" stroke-width="1.8"></path></svg>
<svg style="left:8px;top:449px;" width="21" height="18" viewBox="0 0 21 18"><path d="M1 1.5 H20 L16 4 H5Z" fill="#e8eaec"></path><rect x="9.8" y="4" width="1.4" height="4" fill="#ccc"></rect><path d="M3 12.5 Q10.5 3.5 18 12.5Z" fill="#f08a28"></path><path d="M2 13 Q10.5 18 19 13Z" fill="#f0d060"></path><circle cx="10.5" cy="13.5" r="1.6" fill="#fff"></circle></svg>
<svg style="left:10px;top:471px;" width="17" height="19" viewBox="0 0 17 19"><circle cx="8.5" cy="5.5" r="4.5" fill="#58b040"></circle><circle cx="5" cy="9" r="4" fill="#48a030"></circle><circle cx="12" cy="9" r="4" fill="#68c050"></circle><circle cx="8.5" cy="10" r="3.5" fill="#50a838"></circle><rect x="7.7" y="12" width="1.8" height="5" fill="#8a6a40"></rect><rect x="1" y="16.5" width="15" height="1.6" fill="#d8a868"></rect></svg>
<svg style="left:9px;top:495px;" width="19" height="18" viewBox="0 0 19 18"><circle cx="9.5" cy="9" r="8.3" fill="#e8e8e8"></circle><circle cx="9.5" cy="9" r="7" fill="#1a1a1a"></circle><path d="M4 8 H15 V12 Q9.5 16 4 12Z" fill="#f0f0f0"></path><path d="M7.7 8 V14 M11.3 8 V14" stroke="#1a1a1a" stroke-width="1.4"></path></svg>
<svg style="left:9px;top:542px;" width="20" height="17" viewBox="0 0 20 17"><path d="M1 12 L8 3 L19 9 L15 15 L8 8 L3 13Z" fill="#28a8d8"></path><path d="M8 3 L19 9 L15 10 L8 6Z" fill="#70d0f0"></path></svg>
<svg style="left:8px;top:565px;" width="21" height="17" viewBox="0 0 21 17"><path d="M1 9 L11 2 L20 8 L10 15Z" fill="#2040b0" stroke="#b8c4f0" stroke-width="1"></path><path d="M5 8.5 L11 4.5 L16 8 L10 12Z" fill="#5a7ae8"></path><path d="M7 7 L14 10 M9 5.5 L13 12" stroke="#90a8f0" stroke-width="0.6"></path></svg>
<svg style="left:9px;top:611px;" width="20" height="18" viewBox="0 0 20 18"><path d="M1.5 1 V16 H13" stroke="#e8e8e8" stroke-width="1.5" fill="none"></path><path d="M2 15.5 L13 2 H1.5" stroke="#e8e8e8" stroke-width="1.3" fill="none"></path><circle cx="14" cy="13" r="3" fill="none" stroke="#7aa8c8" stroke-width="1.6"></circle><path d="M16 15 L19 17.5" stroke="#7aa8c8" stroke-width="1.8"></path></svg>
<svg style="left:9px;top:634px;" width="20" height="18" viewBox="0 0 20 18"><rect x="1" y="2" width="13" height="12" fill="#f4f4f4" stroke="#c08080" stroke-width="0.8"></rect><path d="M3.5 8 L6.5 11 L12 4" stroke="#d82020" stroke-width="1.8" fill="none"></path><circle cx="14" cy="13" r="3" fill="#dde" stroke="#7aa8c8" stroke-width="1.6"></circle><path d="M16 15 L19 17.5" stroke="#7aa8c8" stroke-width="1.8"></path></svg>
<div style="left:7px;top:660px;width:151px;height:40px;border:1.5px solid #3c4248;border-radius:5px;background:#1c1f23;"></div>
<div style="left:11px;top:664px;width:144px;height:32.5px;background:linear-gradient(#a8c4f8 0%,#6a86cc 14%,#34467c 42%,#1e2a50 62%,#2c3c6c 85%,#3a4c80 100%);"></div>
<svg style="left:34px;top:666px;" width="30" height="30" viewBox="0 0 30 30"><path d="M15 1 L28 8 V22 L15 29 L2 22 V8Z" fill="#dfe4ea" stroke="#1a2030" stroke-width="1.2"></path><path d="M15 4 L25 9.5 V20 L15 14.5Z" fill="#b8c2cc"></path><path d="M5 9.5 L15 4 V14.5 L5 20Z" fill="#f4f6f8"></path><path d="M5 20 L15 14.5 L25 20 L15 26Z" fill="#98a2ac"></path><path d="M5 13 L13 10 L18 12.5 L10 15.5Z" fill="#b8701e"></path><path d="M6 13.5 V19 M10 15.5 V21" stroke="#3a2a1a" stroke-width="1.1"></path><path d="M17 16 L22 12.5 V18 L18 20Z" fill="#4a8ad0"></path></svg>
<div class="f" style="left: 72px; top: 669.5px; font-size: 20px; line-height: 20px; color: rgb(255, 255, 255); --w: 58px; font-weight: bold; text-shadow: rgb(6, 16, 42) 0px 0px 2px, rgb(6, 16, 42) 0px 0px 3px; transform: scaleX(0.9667);">立体化</div>
<div style="left:169px;top:143px;width:305px;height:813px;background:#1f2327;"></div>
<div style="left:174px;top:148px;width:299px;height:808px;background:#555a5f;"></div>
<div style="left:473px;top:148px;width:1.5px;height:808px;background:#464b50;"></div>
<div style="left:174px;top:148px;width:149px;height:34px;background:linear-gradient(#74797e,#5c6166 60%,#555a5f);border-top-left-radius:2px;"></div>
<div style="left:323px;top:148px;width:150px;height:34px;background:linear-gradient(#43474c,#2e3236 50%,#212427);border:1px solid #1a1d20;border-bottom:none;"></div>
<div class="f" style="left: 199px; top: 154.9px; font-size: 15px; line-height: 15px; color: rgb(220, 221, 224); --w: 98px; transform: scaleX(1);">四角形･多角形</div>
<div class="f" style="left: 368px; top: 154.9px; font-size: 15px; line-height: 15px; color: rgb(220, 221, 224); --w: 61.5px; transform: scaleX(0.82);">部屋セット</div>
<div style="left:188px;top:175px;width:120px;height:4px;background:#e8b83c;border-radius:2px;box-shadow:0 0 3px #c8901c;"></div>
<div class="f" style="left: 184.3px; top: 196.7px; font-size: 15px; line-height: 15px; color: rgb(242, 194, 58); --w: 75px; transform: scaleX(1);">四角形配置</div>
<div style="left:374px;top:198.5px;width:15px;height:15px;border:1.5px solid #a8acb0;"></div>
<div class="f" style="left: 390.5px; top: 198px; font-size: 15px; line-height: 15px; color: rgb(216, 218, 220); --w: 72px; transform: scaleX(0.96);">部屋の説明</div>
<div style="left:192px;top:780px;width:68px;height:41px;background:linear-gradient(#d0d0d0,#a8a8a8);border-left:2.5px solid #050505;border-right:2.5px solid #050505;"></div>
<div style="left:277px;top:780px;width:68px;height:41px;background:linear-gradient(#d0d0d0,#a8a8a8);border-left:2.5px solid #050505;border-right:2.5px solid #050505;"></div>
<div style="left:362px;top:780px;width:68px;height:41px;background:linear-gradient(#d0d0d0,#a8a8a8);border-left:2.5px solid #050505;border-right:2.5px solid #050505;"></div>
<div class="f" style="left: 212px; top: 812px; font-size: 15px; line-height: 15px; color: rgb(17, 17, 17); --w: 26px; transform: scaleX(0.8667);">押入</div>
<div class="f" style="left: 287px; top: 812.5px; font-size: 15px; line-height: 15px; color: rgb(17, 17, 17); --w: 51px; transform: scaleX(0.68);">クロゼット</div>
<div class="f" style="left: 382px; top: 812px; font-size: 15px; line-height: 15px; color: rgb(17, 17, 17); --w: 26px; transform: scaleX(0.8667);">物入</div>
<div style="left:174px;top:821px;width:299px;height:7px;background:#555a5f;"></div>
<div style="left:440px;top:800px;width:15px;height:21px;background:#2e3236;"></div>
<svg style="left:444px;top:812px;" width="10" height="6" viewBox="0 0 10 6"><path d="M0.5 0.5 H9.5 L5 5Z" fill="#e8e8e8"></path></svg>
<div style="left:174px;top:827px;width:299px;height:2px;background:linear-gradient(#3a3e42 50%,#62676c 50%);"></div>
<div class="f" style="left: 183.4px; top: 842.8px; font-size: 15px; line-height: 15px; color: rgb(232, 184, 56); --w: 73px; transform: scaleX(0.9733);">多角形入力</div>
<div style="left:195px;top:869.5px;width:72px;height:73.5px;border:1px solid #3a3e42;background:linear-gradient(#3e4246 0%,#1e2124 55%,#000 100%);"></div>
<svg style="left:208px;top:878px;" width="47" height="40" viewBox="0 0 47 40"><defs><linearGradient id="pg" x1="0" y1="0" x2="1" y2="1"><stop offset="0" stop-color="#f2d49a"></stop><stop offset="1" stop-color="#b8946a"></stop></linearGradient></defs><path d="M1.5 1.5 H20 L45.5 16 V38.5 H1.5Z" fill="url(#pg)" stroke="#a8a49c" stroke-width="1.8"></path></svg>
<div class="f" style="left: 210px; top: 922.5px; font-size: 15px; line-height: 15px; color: rgb(240, 240, 240); --w: 45px; transform: scaleX(1);">多角形</div>
<div class="f" style="left: 280px; top: 868px; font-size: 14px; line-height: 14px; color: rgb(216, 218, 220); --w: 164px; transform: scaleX(0.8822);">① 【多角形】ボタンを押す。</div>
<div class="f" style="left: 280px; top: 887.5px; font-size: 14px; line-height: 14px; color: rgb(216, 218, 220); --w: 181px; transform: scaleX(0.9055);">② 部屋の頂点を順にクリック。</div>
<div class="f" style="left: 280px; top: 907px; font-size: 14px; line-height: 14px; color: rgb(216, 218, 220); --w: 181px; transform: scaleX(0.9737);">③ 最後に始点に戻って完了。</div>
<div style="left:280px;top:928.5px;width:15px;height:15px;background:#2a8ae8;"></div>
<div class="f" style="left: 283.5px; top: 929px; font-size: 13px; line-height: 13px; color: rgb(255, 255, 255); --w: 8px; font-weight: bold; transform: scaleX(1.0059);">?</div>
<div class="f" style="left: 299.4px; top: 927.5px; font-size: 15px; line-height: 15px; color: rgb(88, 176, 240); --w: 146px; transform: scaleX(0.9669);">頂点の移動･追加･削除</div>
<div style="left:474px;top:148px;width:1133px;height:808px;background:#787d82;"></div>
<div style="left:474px;top:148px;width:1px;height:808px;background:#8e9398;"></div>
<div style="left:1607px;top:143px;width:37px;height:813px;background:#1f2327;"></div>
<div style="left:1622px;top:146px;width:20px;height:20px;border:1px solid #d8d8d8;background:#1c1f22;"></div>
<div style="left:1623px;top:147px;width:4px;height:18px;background:#f0b820;"></div>
<svg style="left:1629px;top:149px;" width="10" height="14" viewBox="0 0 10 14"><path d="M8 1 L1 7 L8 13Z" fill="#e8eaf0"></path></svg>
<svg style="left:474px;top:148px;" width="1133" height="808" viewBox="0 0 1133 808"><rect x="40" y="15" width="1.4" height="9" fill="#fff"></rect><rect x="58" y="15" width="1.4" height="9" fill="#fff"></rect><rect x="76" y="15" width="1.4" height="9" fill="#fff"></rect><rect x="95" y="15" width="1.4" height="9" fill="#fff"></rect><rect x="113" y="15" width="1.4" height="9" fill="#fff"></rect><rect x="131" y="15" width="1.4" height="9" fill="#fff"></rect><rect x="149" y="15" width="1.4" height="9" fill="#fff"></rect><rect x="167" y="15" width="1.4" height="9" fill="#fff"></rect><rect x="186" y="15" width="1.4" height="9" fill="#fff"></rect><rect x="204" y="15" width="1.4" height="9" fill="#fff"></rect><rect x="222" y="15" width="1.4" height="9" fill="#fff"></rect><rect x="240" y="15" width="1.4" height="9" fill="#fff"></rect><rect x="258" y="15" width="1.4" height="9" fill="#fff"></rect><rect x="277" y="15" width="1.4" height="9" fill="#fff"></rect><rect x="295" y="15" width="1.4" height="9" fill="#fff"></rect><rect x="313" y="15" width="1.4" height="9" fill="#fff"></rect><rect x="331" y="15" width="1.4" height="9" fill="#fff"></rect><rect x="349" y="15" width="1.4" height="9" fill="#fff"></rect><rect x="368" y="15" width="1.4" height="9" fill="#fff"></rect><rect x="386" y="15" width="1.4" height="9" fill="#fff"></rect><rect x="404" y="15" width="1.4" height="9" fill="#fff"></rect><rect x="422" y="15" width="1.4" height="9" fill="#fff"></rect><rect x="440" y="15" width="1.4" height="9" fill="#fff"></rect><rect x="459" y="15" width="1.4" height="9" fill="#fff"></rect><rect x="477" y="15" width="1.4" height="9" fill="#fff"></rect><rect x="495" y="15" width="1.4" height="9" fill="#fff"></rect><rect x="513" y="15" width="1.4" height="9" fill="#fff"></rect><rect x="531" y="15" width="1.4" height="9" fill="#fff"></rect><rect x="550" y="15" width="1.4" height="9" fill="#fff"></rect><rect x="568" y="15" width="1.4" height="9" fill="#fff"></rect><rect x="586" y="15" width="1.4" height="9" fill="#fff"></rect><rect x="604" y="15" width="1.4" height="9" fill="#fff"></rect><rect x="622" y="15" width="1.4" height="9" fill="#fff"></rect><rect x="641" y="15" width="1.4" height="9" fill="#fff"></rect><rect x="659" y="15" width="1.4" height="9" fill="#fff"></rect><rect x="677" y="15" width="1.4" height="9" fill="#fff"></rect><rect x="695" y="15" width="1.4" height="9" fill="#fff"></rect><rect x="713" y="15" width="1.4" height="9" fill="#fff"></rect><rect x="732" y="15" width="1.4" height="9" fill="#fff"></rect><rect x="750" y="15" width="1.4" height="9" fill="#fff"></rect><rect x="768" y="15" width="1.4" height="9" fill="#fff"></rect><rect x="786" y="15" width="1.4" height="9" fill="#fff"></rect><rect x="804" y="15" width="1.4" height="9" fill="#fff"></rect><rect x="823" y="15" width="1.4" height="9" fill="#fff"></rect><rect x="841" y="15" width="1.4" height="9" fill="#fff"></rect><rect x="859" y="15" width="1.4" height="9" fill="#fff"></rect><rect x="877" y="15" width="1.4" height="9" fill="#fff"></rect><rect x="895" y="15" width="1.4" height="9" fill="#fff"></rect><rect x="914" y="15" width="1.4" height="9" fill="#fff"></rect><rect x="932" y="15" width="1.4" height="9" fill="#fff"></rect><rect x="950" y="15" width="1.4" height="9" fill="#fff"></rect><rect x="968" y="15" width="1.4" height="9" fill="#fff"></rect><rect x="986" y="15" width="1.4" height="9" fill="#fff"></rect><rect x="1005" y="15" width="1.4" height="9" fill="#fff"></rect><rect x="1023" y="15" width="1.4" height="9" fill="#fff"></rect><rect x="1041" y="15" width="1.4" height="9" fill="#fff"></rect><rect x="1059" y="15" width="1.4" height="9" fill="#fff"></rect><rect x="1077" y="15" width="1.4" height="9" fill="#fff"></rect><rect x="16" y="45" width="9" height="1.4" fill="#fff"></rect><rect x="16" y="63" width="9" height="1.4" fill="#fff"></rect><rect x="16" y="81" width="9" height="1.4" fill="#fff"></rect><rect x="16" y="99" width="9" height="1.4" fill="#fff"></rect><rect x="16" y="118" width="9" height="1.4" fill="#fff"></rect><rect x="16" y="136" width="9" height="1.4" fill="#fff"></rect><rect x="16" y="154" width="9" height="1.4" fill="#fff"></rect><rect x="16" y="172" width="9" height="1.4" fill="#fff"></rect><rect x="16" y="190" width="9" height="1.4" fill="#fff"></rect><rect x="16" y="209" width="9" height="1.4" fill="#fff"></rect><rect x="16" y="227" width="9" height="1.4" fill="#fff"></rect><rect x="16" y="245" width="9" height="1.4" fill="#fff"></rect><rect x="16" y="263" width="9" height="1.4" fill="#fff"></rect><rect x="16" y="281" width="9" height="1.4" fill="#fff"></rect><rect x="16" y="300" width="9" height="1.4" fill="#fff"></rect><rect x="16" y="318" width="9" height="1.4" fill="#fff"></rect><rect x="16" y="336" width="9" height="1.4" fill="#fff"></rect><rect x="16" y="354" width="9" height="1.4" fill="#fff"></rect><rect x="16" y="372" width="9" height="1.4" fill="#fff"></rect><rect x="16" y="391" width="9" height="1.4" fill="#fff"></rect><rect x="16" y="409" width="9" height="1.4" fill="#fff"></rect><rect x="16" y="427" width="9" height="1.4" fill="#fff"></rect><rect x="16" y="445" width="9" height="1.4" fill="#fff"></rect><rect x="16" y="463" width="9" height="1.4" fill="#fff"></rect><rect x="16" y="482" width="9" height="1.4" fill="#fff"></rect><rect x="16" y="500" width="9" height="1.4" fill="#fff"></rect><rect x="16" y="518" width="9" height="1.4" fill="#fff"></rect><rect x="16" y="536" width="9" height="1.4" fill="#fff"></rect><rect x="16" y="554" width="9" height="1.4" fill="#fff"></rect><rect x="16" y="573" width="9" height="1.4" fill="#fff"></rect><rect x="16" y="591" width="9" height="1.4" fill="#fff"></rect><rect x="16" y="609" width="9" height="1.4" fill="#fff"></rect><rect x="16" y="627" width="9" height="1.4" fill="#fff"></rect><rect x="16" y="645" width="9" height="1.4" fill="#fff"></rect><rect x="16" y="664" width="9" height="1.4" fill="#fff"></rect><rect x="16" y="682" width="9" height="1.4" fill="#fff"></rect><rect x="16" y="700" width="9" height="1.4" fill="#fff"></rect><rect x="16" y="718" width="9" height="1.4" fill="#fff"></rect><rect x="16" y="736" width="9" height="1.4" fill="#fff"></rect><rect x="16" y="755" width="9" height="1.4" fill="#fff"></rect><rect x="16" y="773" width="9" height="1.4" fill="#fff"></rect></svg>
<svg style="left:501px;top:174px;shape-rendering:crispEdges;" width="1086" height="762" viewBox="0 0 1086 762"><rect width="1086" height="762" fill="#fff"></rect><defs><pattern id="stripe" x="0" y="0" width="4" height="3" patternUnits="userSpaceOnUse"><rect width="4" height="3" fill="#ecdcbc"></rect><rect width="4" height="1" fill="#c9b89e"></rect></pattern></defs><rect x="413" y="276" width="584" height="216" fill="url(#stripe)"></rect><line x1="13.5" y1="0" x2="13.5" y2="762" stroke="#c4c4c4" stroke-width="1" stroke-dasharray="2 2"></line><line x1="31.5" y1="0" x2="31.5" y2="762" stroke="#c4c4c4" stroke-width="1" stroke-dasharray="2 2"></line><line x1="49.5" y1="0" x2="49.5" y2="762" stroke="#c4c4c4" stroke-width="1" stroke-dasharray="2 2"></line><line x1="68.5" y1="0" x2="68.5" y2="762" stroke="#c4c4c4" stroke-width="1" stroke-dasharray="2 2"></line><rect x="86" y="0" width="1" height="762" fill="#c8c8c8"></rect><line x1="104.5" y1="0" x2="104.5" y2="762" stroke="#c4c4c4" stroke-width="1" stroke-dasharray="2 2"></line><line x1="122.5" y1="0" x2="122.5" y2="762" stroke="#c4c4c4" stroke-width="1" stroke-dasharray="2 2"></line><line x1="140.5" y1="0" x2="140.5" y2="762" stroke="#c4c4c4" stroke-width="1" stroke-dasharray="2 2"></line><line x1="159.5" y1="0" x2="159.5" y2="762" stroke="#c4c4c4" stroke-width="1" stroke-dasharray="2 2"></line><rect x="177" y="0" width="1" height="762" fill="#c8c8c8"></rect><line x1="195.5" y1="0" x2="195.5" y2="762" stroke="#c4c4c4" stroke-width="1" stroke-dasharray="2 2"></line><line x1="213.5" y1="0" x2="213.5" y2="762" stroke="#c4c4c4" stroke-width="1" stroke-dasharray="2 2"></line><line x1="231.5" y1="0" x2="231.5" y2="762" stroke="#c4c4c4" stroke-width="1" stroke-dasharray="2 2"></line><line x1="250.5" y1="0" x2="250.5" y2="762" stroke="#c4c4c4" stroke-width="1" stroke-dasharray="2 2"></line><rect x="268" y="0" width="1" height="762" fill="#c8c8c8"></rect><line x1="286.5" y1="0" x2="286.5" y2="762" stroke="#c4c4c4" stroke-width="1" stroke-dasharray="2 2"></line><line x1="304.5" y1="0" x2="304.5" y2="762" stroke="#c4c4c4" stroke-width="1" stroke-dasharray="2 2"></line><line x1="322.5" y1="0" x2="322.5" y2="762" stroke="#c4c4c4" stroke-width="1" stroke-dasharray="2 2"></line><line x1="341.5" y1="0" x2="341.5" y2="762" stroke="#c4c4c4" stroke-width="1" stroke-dasharray="2 2"></line><rect x="359" y="0" width="1" height="762" fill="#c8c8c8"></rect><line x1="377.5" y1="0" x2="377.5" y2="762" stroke="#c4c4c4" stroke-width="1" stroke-dasharray="2 2"></line><line x1="395.5" y1="0" x2="395.5" y2="762" stroke="#c4c4c4" stroke-width="1" stroke-dasharray="2 2"></line><line x1="413.5" y1="0" x2="413.5" y2="762" stroke="#c4c4c4" stroke-width="1" stroke-dasharray="2 2"></line><line x1="432.5" y1="0" x2="432.5" y2="762" stroke="#c4c4c4" stroke-width="1" stroke-dasharray="2 2"></line><rect x="450" y="0" width="1" height="762" fill="#c8c8c8"></rect><line x1="468.5" y1="0" x2="468.5" y2="762" stroke="#c4c4c4" stroke-width="1" stroke-dasharray="2 2"></line><line x1="486.5" y1="0" x2="486.5" y2="762" stroke="#c4c4c4" stroke-width="1" stroke-dasharray="2 2"></line><line x1="504.5" y1="0" x2="504.5" y2="762" stroke="#c4c4c4" stroke-width="1" stroke-dasharray="2 2"></line><line x1="523.5" y1="0" x2="523.5" y2="762" stroke="#c4c4c4" stroke-width="1" stroke-dasharray="2 2"></line><rect x="541" y="0" width="1" height="762" fill="#c8c8c8"></rect><line x1="559.5" y1="0" x2="559.5" y2="762" stroke="#c4c4c4" stroke-width="1" stroke-dasharray="2 2"></line><line x1="577.5" y1="0" x2="577.5" y2="762" stroke="#c4c4c4" stroke-width="1" stroke-dasharray="2 2"></line><line x1="595.5" y1="0" x2="595.5" y2="762" stroke="#c4c4c4" stroke-width="1" stroke-dasharray="2 2"></line><line x1="614.5" y1="0" x2="614.5" y2="762" stroke="#c4c4c4" stroke-width="1" stroke-dasharray="2 2"></line><rect x="632" y="0" width="1" height="762" fill="#c8c8c8"></rect><line x1="650.5" y1="0" x2="650.5" y2="762" stroke="#c4c4c4" stroke-width="1" stroke-dasharray="2 2"></line><line x1="668.5" y1="0" x2="668.5" y2="762" stroke="#c4c4c4" stroke-width="1" stroke-dasharray="2 2"></line><line x1="686.5" y1="0" x2="686.5" y2="762" stroke="#c4c4c4" stroke-width="1" stroke-dasharray="2 2"></line><line x1="705.5" y1="0" x2="705.5" y2="762" stroke="#c4c4c4" stroke-width="1" stroke-dasharray="2 2"></line><rect x="723" y="0" width="1" height="762" fill="#c8c8c8"></rect><line x1="741.5" y1="0" x2="741.5" y2="762" stroke="#c4c4c4" stroke-width="1" stroke-dasharray="2 2"></line><line x1="759.5" y1="0" x2="759.5" y2="762" stroke="#c4c4c4" stroke-width="1" stroke-dasharray="2 2"></line><line x1="777.5" y1="0" x2="777.5" y2="762" stroke="#c4c4c4" stroke-width="1" stroke-dasharray="2 2"></line><line x1="796.5" y1="0" x2="796.5" y2="762" stroke="#c4c4c4" stroke-width="1" stroke-dasharray="2 2"></line><rect x="814" y="0" width="1" height="762" fill="#c8c8c8"></rect><line x1="832.5" y1="0" x2="832.5" y2="762" stroke="#c4c4c4" stroke-width="1" stroke-dasharray="2 2"></line><line x1="850.5" y1="0" x2="850.5" y2="762" stroke="#c4c4c4" stroke-width="1" stroke-dasharray="2 2"></line><line x1="868.5" y1="0" x2="868.5" y2="762" stroke="#c4c4c4" stroke-width="1" stroke-dasharray="2 2"></line><line x1="887.5" y1="0" x2="887.5" y2="762" stroke="#c4c4c4" stroke-width="1" stroke-dasharray="2 2"></line><rect x="905" y="0" width="1" height="762" fill="#c8c8c8"></rect><line x1="923.5" y1="0" x2="923.5" y2="762" stroke="#c4c4c4" stroke-width="1" stroke-dasharray="2 2"></line><line x1="941.5" y1="0" x2="941.5" y2="762" stroke="#c4c4c4" stroke-width="1" stroke-dasharray="2 2"></line><line x1="959.5" y1="0" x2="959.5" y2="762" stroke="#c4c4c4" stroke-width="1" stroke-dasharray="2 2"></line><line x1="978.5" y1="0" x2="978.5" y2="762" stroke="#c4c4c4" stroke-width="1" stroke-dasharray="2 2"></line><rect x="996" y="0" width="1" height="762" fill="#c8c8c8"></rect><line x1="1014.5" y1="0" x2="1014.5" y2="762" stroke="#c4c4c4" stroke-width="1" stroke-dasharray="2 2"></line><line x1="1032.5" y1="0" x2="1032.5" y2="762" stroke="#c4c4c4" stroke-width="1" stroke-dasharray="2 2"></line><line x1="1050.5" y1="0" x2="1050.5" y2="762" stroke="#c4c4c4" stroke-width="1" stroke-dasharray="2 2"></line><line x1="1069.5" y1="0" x2="1069.5" y2="762" stroke="#c4c4c4" stroke-width="1" stroke-dasharray="2 2"></line><line x1="0" y1="1.5" x2="1086" y2="1.5" stroke="#c4c4c4" stroke-width="1" stroke-dasharray="2 2"></line><rect x="0" y="19" width="1086" height="1" fill="#c8c8c8"></rect><line x1="0" y1="37.5" x2="1086" y2="37.5" stroke="#c4c4c4" stroke-width="1" stroke-dasharray="2 2"></line><line x1="0" y1="55.5" x2="1086" y2="55.5" stroke="#c4c4c4" stroke-width="1" stroke-dasharray="2 2"></line><line x1="0" y1="73.5" x2="1086" y2="73.5" stroke="#c4c4c4" stroke-width="1" stroke-dasharray="2 2"></line><line x1="0" y1="92.5" x2="1086" y2="92.5" stroke="#c4c4c4" stroke-width="1" stroke-dasharray="2 2"></line><rect x="0" y="110" width="1086" height="1" fill="#c8c8c8"></rect><line x1="0" y1="128.5" x2="1086" y2="128.5" stroke="#c4c4c4" stroke-width="1" stroke-dasharray="2 2"></line><line x1="0" y1="146.5" x2="1086" y2="146.5" stroke="#c4c4c4" stroke-width="1" stroke-dasharray="2 2"></line><line x1="0" y1="164.5" x2="1086" y2="164.5" stroke="#c4c4c4" stroke-width="1" stroke-dasharray="2 2"></line><line x1="0" y1="183.5" x2="1086" y2="183.5" stroke="#c4c4c4" stroke-width="1" stroke-dasharray="2 2"></line><rect x="0" y="201" width="1086" height="1" fill="#c8c8c8"></rect><line x1="0" y1="219.5" x2="1086" y2="219.5" stroke="#c4c4c4" stroke-width="1" stroke-dasharray="2 2"></line><line x1="0" y1="237.5" x2="1086" y2="237.5" stroke="#c4c4c4" stroke-width="1" stroke-dasharray="2 2"></line><line x1="0" y1="255.5" x2="1086" y2="255.5" stroke="#c4c4c4" stroke-width="1" stroke-dasharray="2 2"></line><line x1="0" y1="274.5" x2="1086" y2="274.5" stroke="#c4c4c4" stroke-width="1" stroke-dasharray="2 2"></line><rect x="0" y="292" width="1086" height="1" fill="#c8c8c8"></rect><line x1="0" y1="310.5" x2="1086" y2="310.5" stroke="#c4c4c4" stroke-width="1" stroke-dasharray="2 2"></line><line x1="0" y1="328.5" x2="1086" y2="328.5" stroke="#c4c4c4" stroke-width="1" stroke-dasharray="2 2"></line><line x1="0" y1="346.5" x2="1086" y2="346.5" stroke="#c4c4c4" stroke-width="1" stroke-dasharray="2 2"></line><line x1="0" y1="365.5" x2="1086" y2="365.5" stroke="#c4c4c4" stroke-width="1" stroke-dasharray="2 2"></line><rect x="0" y="383" width="1086" height="1" fill="#c8c8c8"></rect><line x1="0" y1="401.5" x2="1086" y2="401.5" stroke="#c4c4c4" stroke-width="1" stroke-dasharray="2 2"></line><line x1="0" y1="419.5" x2="1086" y2="419.5" stroke="#c4c4c4" stroke-width="1" stroke-dasharray="2 2"></line><line x1="0" y1="437.5" x2="1086" y2="437.5" stroke="#c4c4c4" stroke-width="1" stroke-dasharray="2 2"></line><line x1="0" y1="456.5" x2="1086" y2="456.5" stroke="#c4c4c4" stroke-width="1" stroke-dasharray="2 2"></line><rect x="0" y="474" width="1086" height="1" fill="#c8c8c8"></rect><line x1="0" y1="492.5" x2="1086" y2="492.5" stroke="#c4c4c4" stroke-width="1" stroke-dasharray="2 2"></line><line x1="0" y1="510.5" x2="1086" y2="510.5" stroke="#c4c4c4" stroke-width="1" stroke-dasharray="2 2"></line><line x1="0" y1="528.5" x2="1086" y2="528.5" stroke="#c4c4c4" stroke-width="1" stroke-dasharray="2 2"></line><line x1="0" y1="547.5" x2="1086" y2="547.5" stroke="#c4c4c4" stroke-width="1" stroke-dasharray="2 2"></line><rect x="0" y="565" width="1086" height="1" fill="#c8c8c8"></rect><line x1="0" y1="583.5" x2="1086" y2="583.5" stroke="#c4c4c4" stroke-width="1" stroke-dasharray="2 2"></line><line x1="0" y1="601.5" x2="1086" y2="601.5" stroke="#c4c4c4" stroke-width="1" stroke-dasharray="2 2"></line><line x1="0" y1="619.5" x2="1086" y2="619.5" stroke="#c4c4c4" stroke-width="1" stroke-dasharray="2 2"></line><line x1="0" y1="638.5" x2="1086" y2="638.5" stroke="#c4c4c4" stroke-width="1" stroke-dasharray="2 2"></line><rect x="0" y="656" width="1086" height="1" fill="#c8c8c8"></rect><line x1="0" y1="674.5" x2="1086" y2="674.5" stroke="#c4c4c4" stroke-width="1" stroke-dasharray="2 2"></line><line x1="0" y1="692.5" x2="1086" y2="692.5" stroke="#c4c4c4" stroke-width="1" stroke-dasharray="2 2"></line><line x1="0" y1="710.5" x2="1086" y2="710.5" stroke="#c4c4c4" stroke-width="1" stroke-dasharray="2 2"></line><line x1="0" y1="729.5" x2="1086" y2="729.5" stroke="#c4c4c4" stroke-width="1" stroke-dasharray="2 2"></line><rect x="0" y="747" width="1086" height="1" fill="#c8c8c8"></rect><rect x="412" y="236" width="586" height="40" fill="#d0d0d0" fill-opacity="0.85"></rect><rect x="412" y="492" width="586" height="29" fill="#d0d0d0" fill-opacity="0.85"></rect><rect x="412" y="236" width="586" height="3" fill="#585c60"></rect><rect x="412" y="237" width="586" height="1" fill="#74787c"></rect><rect x="412" y="518" width="586" height="3" fill="#585c60"></rect><rect x="412" y="519" width="586" height="1" fill="#74787c"></rect><rect x="412" y="236" width="3" height="285" fill="#585c60"></rect><rect x="413" y="236" width="1" height="285" fill="#74787c"></rect><rect x="995" y="236" width="3" height="285" fill="#585c60"></rect><rect x="996" y="236" width="1" height="285" fill="#74787c"></rect><rect x="412" y="273" width="586" height="3" fill="#585c60"></rect><rect x="412" y="274" width="586" height="1" fill="#74787c"></rect><rect x="412" y="491" width="586" height="3" fill="#585c60"></rect><rect x="412" y="492" width="586" height="1" fill="#74787c"></rect><rect x="558" y="273" width="3" height="248" fill="#585c60"></rect><rect x="559" y="273" width="1" height="248" fill="#74787c"></rect><rect x="704" y="273" width="3" height="248" fill="#585c60"></rect><rect x="705" y="273" width="1" height="248" fill="#74787c"></rect><rect x="850" y="273" width="3" height="248" fill="#585c60"></rect><rect x="851" y="273" width="1" height="248" fill="#74787c"></rect><rect x="452" y="273" width="21" height="3" fill="#d6d6d6"></rect><rect x="452" y="276" width="21" height="17" fill="#d6d6d6"></rect><rect x="449" y="273" width="3" height="21" fill="#585c60"></rect><rect x="450" y="273" width="1" height="21" fill="#74787c"></rect><rect x="449" y="291" width="6" height="3" fill="#585c60"></rect><rect x="473" y="273" width="6" height="21" fill="#585c60"></rect><rect x="474.5" y="276" width="2.5" height="14.5" fill="#e4e4e4"></rect><rect x="473" y="291" width="6" height="3" fill="#585c60"></rect><path d="M455 293 A19 19 0 0 1 473 275" stroke="#5f6367" stroke-width="1" fill="none" shape-rendering="geometricPrecision"></path><rect x="426" y="491" width="17" height="3" fill="#d6d6d6"></rect><rect x="426" y="494" width="1.2" height="14" fill="#5f6367"></rect><path d="M426 508 A16 16 0 0 0 443 492" stroke="#5f6367" stroke-width="1" fill="none" shape-rendering="geometricPrecision"></path><rect x="486" y="491" width="13" height="1.5" fill="#ecdcbc"></rect><rect x="486" y="492.5" width="13" height="1.5" fill="#6a6e72"></rect><rect x="486" y="489" width="1" height="2" fill="#6a6e72"></rect><rect x="498" y="489" width="1" height="2" fill="#6a6e72"></rect><rect x="526" y="491" width="12" height="1.5" fill="#ecdcbc"></rect><rect x="526" y="492.5" width="12" height="1.5" fill="#6a6e72"></rect><rect x="526" y="489" width="1" height="2" fill="#6a6e72"></rect><rect x="537" y="489" width="1" height="2" fill="#6a6e72"></rect><rect x="597" y="273" width="21" height="3" fill="#d6d6d6"></rect><rect x="597" y="276" width="21" height="17" fill="#d6d6d6"></rect><rect x="594" y="273" width="3" height="21" fill="#585c60"></rect><rect x="595" y="273" width="1" height="21" fill="#74787c"></rect><rect x="594" y="291" width="6" height="3" fill="#585c60"></rect><rect x="618" y="273" width="6" height="21" fill="#585c60"></rect><rect x="619.5" y="276" width="2.5" height="14.5" fill="#e4e4e4"></rect><rect x="618" y="291" width="6" height="3" fill="#585c60"></rect><path d="M600 293 A19 19 0 0 1 618 275" stroke="#5f6367" stroke-width="1" fill="none" shape-rendering="geometricPrecision"></path><rect x="571" y="491" width="17" height="3" fill="#d6d6d6"></rect><rect x="571" y="494" width="1.2" height="14" fill="#5f6367"></rect><path d="M571 508 A16 16 0 0 0 588 492" stroke="#5f6367" stroke-width="1" fill="none" shape-rendering="geometricPrecision"></path><rect x="631" y="491" width="13" height="1.5" fill="#ecdcbc"></rect><rect x="631" y="492.5" width="13" height="1.5" fill="#6a6e72"></rect><rect x="631" y="489" width="1" height="2" fill="#6a6e72"></rect><rect x="643" y="489" width="1" height="2" fill="#6a6e72"></rect><rect x="671" y="491" width="12" height="1.5" fill="#ecdcbc"></rect><rect x="671" y="492.5" width="12" height="1.5" fill="#6a6e72"></rect><rect x="671" y="489" width="1" height="2" fill="#6a6e72"></rect><rect x="682" y="489" width="1" height="2" fill="#6a6e72"></rect><rect x="743" y="273" width="21" height="3" fill="#d6d6d6"></rect><rect x="743" y="276" width="21" height="17" fill="#d6d6d6"></rect><rect x="740" y="273" width="3" height="21" fill="#585c60"></rect><rect x="741" y="273" width="1" height="21" fill="#74787c"></rect><rect x="740" y="291" width="6" height="3" fill="#585c60"></rect><rect x="764" y="273" width="6" height="21" fill="#585c60"></rect><rect x="765.5" y="276" width="2.5" height="14.5" fill="#e4e4e4"></rect><rect x="764" y="291" width="6" height="3" fill="#585c60"></rect><path d="M746 293 A19 19 0 0 1 764 275" stroke="#5f6367" stroke-width="1" fill="none" shape-rendering="geometricPrecision"></path><rect x="717" y="491" width="17" height="3" fill="#d6d6d6"></rect><rect x="717" y="494" width="1.2" height="14" fill="#5f6367"></rect><path d="M717 508 A16 16 0 0 0 734 492" stroke="#5f6367" stroke-width="1" fill="none" shape-rendering="geometricPrecision"></path><rect x="777" y="491" width="13" height="1.5" fill="#ecdcbc"></rect><rect x="777" y="492.5" width="13" height="1.5" fill="#6a6e72"></rect><rect x="777" y="489" width="1" height="2" fill="#6a6e72"></rect><rect x="789" y="489" width="1" height="2" fill="#6a6e72"></rect><rect x="817" y="491" width="12" height="1.5" fill="#ecdcbc"></rect><rect x="817" y="492.5" width="12" height="1.5" fill="#6a6e72"></rect><rect x="817" y="489" width="1" height="2" fill="#6a6e72"></rect><rect x="828" y="489" width="1" height="2" fill="#6a6e72"></rect><rect x="889" y="273" width="21" height="3" fill="#d6d6d6"></rect><rect x="889" y="276" width="21" height="17" fill="#d6d6d6"></rect><rect x="886" y="273" width="3" height="21" fill="#585c60"></rect><rect x="887" y="273" width="1" height="21" fill="#74787c"></rect><rect x="886" y="291" width="6" height="3" fill="#585c60"></rect><rect x="910" y="273" width="6" height="21" fill="#585c60"></rect><rect x="911.5" y="276" width="2.5" height="14.5" fill="#e4e4e4"></rect><rect x="910" y="291" width="6" height="3" fill="#585c60"></rect><path d="M892 293 A19 19 0 0 1 910 275" stroke="#5f6367" stroke-width="1" fill="none" shape-rendering="geometricPrecision"></path><rect x="863" y="491" width="17" height="3" fill="#d6d6d6"></rect><rect x="863" y="494" width="1.2" height="14" fill="#5f6367"></rect><path d="M863 508 A16 16 0 0 0 880 492" stroke="#5f6367" stroke-width="1" fill="none" shape-rendering="geometricPrecision"></path><rect x="923" y="491" width="13" height="1.5" fill="#ecdcbc"></rect><rect x="923" y="492.5" width="13" height="1.5" fill="#6a6e72"></rect><rect x="923" y="489" width="1" height="2" fill="#6a6e72"></rect><rect x="935" y="489" width="1" height="2" fill="#6a6e72"></rect><rect x="963" y="491" width="12" height="1.5" fill="#ecdcbc"></rect><rect x="963" y="492.5" width="12" height="1.5" fill="#6a6e72"></rect><rect x="963" y="489" width="1" height="2" fill="#6a6e72"></rect><rect x="974" y="489" width="1" height="2" fill="#6a6e72"></rect><path d="M613.5 383.5 H651.5 M632.5 364.5 V402.5" stroke="#0a8a0a" stroke-width="1"></path></svg>
<div style="left:1587px;top:174px;width:20px;height:762px;background:#f0f0f0;"></div>
<div style="left:501px;top:936px;width:1106px;height:20px;background:#f0f0f0;"></div>
<div style="left:1588px;top:558px;width:18px;height:21px;background:#cdcdcd;"></div>
<div style="left:903px;top:937px;width:21px;height:18px;background:#cdcdcd;"></div>
<svg style="left:1591px;top:180px;" width="11" height="8" viewBox="0 0 11 8"><path d="M1 6.5 L5.5 2 L10 6.5" stroke="#555" stroke-width="2" fill="none"></path></svg>
<svg style="left:1591px;top:920px;" width="11" height="8" viewBox="0 0 11 8"><path d="M1 1.5 L5.5 6 L10 1.5" stroke="#555" stroke-width="2" fill="none"></path></svg>
<svg style="left:505px;top:940px;" width="8" height="11" viewBox="0 0 8 11"><path d="M6.5 1 L2 5.5 L6.5 10" stroke="#555" stroke-width="2" fill="none"></path></svg>
<svg style="left:1571px;top:940px;" width="8" height="11" viewBox="0 0 8 11"><path d="M1.5 1 L6 5.5 L1.5 10" stroke="#555" stroke-width="2" fill="none"></path></svg>
<div style="left:157px;top:221px;width:706px;height:579px;border:1px solid rgba(0,0,0,0.58);background:#f0f0f0;box-shadow:0 0 14px rgba(0,0,0,0.35);"></div>
<div style="left:158px;top:222px;width:704px;height:37px;background:#ffffff;"></div>
<div class="f" style="left: 167.7px; top: 232.5px; font-size: 15px; line-height: 15px; color: rgb(0, 0, 0); --w: 134.3px; transform: scaleX(0.9875);">階数･階高･壁厚設定</div>
<svg style="left:835px;top:234px;" width="12" height="12" viewBox="0 0 12 12"><path d="M0.5 0.5 L11.5 11.5 M11.5 0.5 L0.5 11.5" stroke="#111" stroke-width="1.2"></path></svg>
<svg style="left:168px;top:273px;" width="230" height="465" viewBox="0 0 230 465"><defs>
<linearGradient id="sky" x1="0" y1="0" x2="0" y2="1"><stop offset="0" stop-color="#223090"></stop><stop offset="0.25" stop-color="#2a3a98"></stop><stop offset="0.6" stop-color="#28508e"></stop><stop offset="1" stop-color="#2a7282"></stop></linearGradient>
<linearGradient id="top" x1="0" y1="0" x2="0" y2="1"><stop offset="0" stop-color="#27327c"></stop><stop offset="0.3" stop-color="#343c80"></stop><stop offset="0.62" stop-color="#9890a0"></stop><stop offset="0.85" stop-color="#cfc5b2"></stop><stop offset="1" stop-color="#d8ceba"></stop></linearGradient>
<linearGradient id="wtop" x1="0" y1="0" x2="0" y2="1"><stop offset="0" stop-color="#2a3680"></stop><stop offset="1" stop-color="#a8acb8"></stop></linearGradient>
<radialGradient id="vig" cx="0.3" cy="0.4" r="0.9"><stop offset="0.6" stop-color="#000" stop-opacity="0"></stop><stop offset="1" stop-color="#000" stop-opacity="0.35"></stop></radialGradient>
<linearGradient id="shx" x1="0" y1="0" x2="1" y2="0"><stop offset="0" stop-color="#000" stop-opacity="0.25"></stop><stop offset="0.07" stop-color="#000" stop-opacity="0"></stop><stop offset="0.9" stop-color="#000" stop-opacity="0"></stop><stop offset="1" stop-color="#000" stop-opacity="0.35"></stop></linearGradient>
<linearGradient id="shy" x1="0" y1="0" x2="0" y2="1"><stop offset="0" stop-color="#000" stop-opacity="0.3"></stop><stop offset="0.08" stop-color="#000" stop-opacity="0"></stop><stop offset="0.92" stop-color="#000" stop-opacity="0"></stop><stop offset="1" stop-color="#000" stop-opacity="0.2"></stop></linearGradient>
<marker id="ar" viewBox="0 0 10 10" refX="9" refY="5" markerWidth="5" markerHeight="5" orient="auto-start-reverse"><path d="M0 0 L10 5 L0 10Z" fill="context-stroke"></path></marker>
</defs><rect x="0" y="0" width="230" height="285" fill="url(#sky)"></rect><rect x="0" y="285" width="230" height="180" fill="#674a20"></rect><rect x="0" y="0" width="93" height="67" fill="url(#top)"></rect><rect x="93" y="0" width="18" height="66" fill="url(#wtop)"></rect><rect x="0" y="67" width="93" height="9.5" fill="#9a7230" stroke="#222" stroke-width="1"></rect><rect x="0" y="77" width="93" height="8" fill="#c2c4c4" stroke="#333" stroke-width="1"></rect><rect x="0" y="85" width="93" height="72" fill="#e6dcc6" stroke="#2a2a2a" stroke-width="1"></rect><rect x="0" y="157.5" width="93" height="9.5" fill="#9a7230" stroke="#222" stroke-width="1"></rect><rect x="0" y="167.5" width="93" height="8" fill="#c2c4c4" stroke="#333" stroke-width="1"></rect><rect x="0" y="175.5" width="93" height="72" fill="#e6dcc6" stroke="#2a2a2a" stroke-width="1"></rect><rect x="0" y="248" width="93" height="9" fill="#9a7230" stroke="#222" stroke-width="1"></rect><rect x="0" y="257.5" width="111" height="28" fill="#7c7c7c" stroke="#333" stroke-width="1"></rect><rect x="0" y="285.5" width="93" height="72" fill="#b2cce2" stroke="#2a2a2a" stroke-width="1"></rect><rect x="0" y="358" width="93" height="9.5" fill="#9a7230" stroke="#222" stroke-width="1"></rect><rect x="0" y="368" width="93" height="8" fill="#c2c4c4" stroke="#333" stroke-width="1"></rect><rect x="0" y="376" width="93" height="72" fill="#b2cce2" stroke="#2a2a2a" stroke-width="1"></rect><rect x="0.5" y="85" width="92.5" height="72" fill="url(#shx)"></rect><rect x="0.5" y="85" width="92.5" height="72" fill="url(#shy)"></rect><rect x="0.5" y="175.5" width="92.5" height="72" fill="url(#shx)"></rect><rect x="0.5" y="175.5" width="92.5" height="72" fill="url(#shy)"></rect><rect x="0.5" y="285.5" width="92.5" height="72" fill="url(#shx)"></rect><rect x="0.5" y="285.5" width="92.5" height="72" fill="url(#shy)"></rect><rect x="0.5" y="376" width="92.5" height="72" fill="url(#shx)"></rect><rect x="0.5" y="376" width="92.5" height="72" fill="url(#shy)"></rect><rect x="93" y="66" width="18" height="191.5" fill="#b6b8b8" stroke="#2a2a2a" stroke-width="1"></rect><rect x="93" y="285.5" width="18" height="162.5" fill="#b6b8b8" stroke="#2a2a2a" stroke-width="1"></rect><rect x="111" y="284" width="119" height="1.5" fill="#2e8a3a"></rect><rect x="0" y="0" width="230" height="465" fill="url(#vig)"></rect><path d="M12 87 L12 155" stroke="#b02828" stroke-width="1.4" fill="none" marker-start="url(#ar)" marker-end="url(#ar)"></path><path d="M12 177 L12 245" stroke="#b02828" stroke-width="1.4" fill="none" marker-start="url(#ar)" marker-end="url(#ar)"></path><path d="M12 287 L12 355" stroke="#b02828" stroke-width="1.4" fill="none" marker-start="url(#ar)" marker-end="url(#ar)"></path><path d="M12 377 L12 446" stroke="#b02828" stroke-width="1.4" fill="none" marker-start="url(#ar)" marker-end="url(#ar)"></path><path d="M92.5 11 L92.5 39" stroke="#f4f4f4" stroke-width="1.3" fill="none"></path><path d="M110.5 11 L110.5 39" stroke="#f4f4f4" stroke-width="1.3" fill="none"></path><path d="M94 23 L109 23" stroke="#f4f4f4" stroke-width="1.4" fill="none" marker-start="url(#ar)" marker-end="url(#ar)"></path><path d="M113 67.5 L189 67.5" stroke="#f4f4f4" stroke-width="1.4" fill="none"></path><path d="M113 157.5 L189 157.5" stroke="#f4f4f4" stroke-width="1.4" fill="none"></path><path d="M113 176 L158 176" stroke="#f4f4f4" stroke-width="1.4" fill="none"></path><path d="M113 248 L215 248" stroke="#f4f4f4" stroke-width="1.4" fill="none"></path><path d="M176.5 69 L176.5 156" stroke="#f4f4f4" stroke-width="1.4" fill="none" marker-start="url(#ar)" marker-end="url(#ar)"></path><path d="M176.5 159 L176.5 246" stroke="#f4f4f4" stroke-width="1.4" fill="none" marker-start="url(#ar)" marker-end="url(#ar)"></path><path d="M137.5 159 L137.5 175" stroke="#f4f4f4" stroke-width="1.4" fill="none" marker-start="url(#ar)" marker-end="url(#ar)"></path><path d="M119.5 249.5 L119.5 284" stroke="#f4f4f4" stroke-width="1.4" fill="none" marker-start="url(#ar)" marker-end="url(#ar)"></path><path d="M100.5 259 L100.5 284" stroke="#f4f4f4" stroke-width="1.4" fill="none" marker-start="url(#ar)" marker-end="url(#ar)"></path><path d="M113 358 L217 358" stroke="#e8c060" stroke-width="1.4" fill="none"></path><path d="M113 448.5 L217 448.5" stroke="#e8c060" stroke-width="1.4" fill="none"></path><path d="M204.5 250 L204.5 357" stroke="#e8c060" stroke-width="1.4" fill="none" marker-start="url(#ar)" marker-end="url(#ar)"></path><path d="M204.5 360 L204.5 447" stroke="#e8c060" stroke-width="1.4" fill="none" marker-start="url(#ar)" marker-end="url(#ar)"></path><rect x="0" y="0" width="230" height="465" fill="none" stroke="#111" stroke-width="1.5"></rect></svg>
<div class="f" style="left: 196.7px; top: 380.8px; font-size: 16px; line-height: 16px; color: rgb(17, 17, 17); --w: 37.6px; transform: scaleX(0.9192);">2階～</div>
<div class="f" style="left: 192.8px; top: 399.5px; font-size: 16px; line-height: 16px; color: rgb(17, 17, 17); --w: 46px; transform: scaleX(0.9583);">天井高</div>
<div class="f" style="left: 206.8px; top: 469px; font-size: 16px; line-height: 16px; color: rgb(17, 17, 17); --w: 20px; transform: scaleX(0.803);">1階</div>
<div class="f" style="left: 192.8px; top: 488.7px; font-size: 16px; line-height: 16px; color: rgb(17, 17, 17); --w: 46px; transform: scaleX(0.9583);">天井高</div>
<div class="f" style="left: 189px; top: 581.6px; font-size: 16px; line-height: 16px; color: rgb(17, 17, 17); --w: 54px; transform: scaleX(0.9489);">地下1階</div>
<div class="f" style="left: 193px; top: 600.8px; font-size: 16px; line-height: 16px; color: rgb(17, 17, 17); --w: 46px; transform: scaleX(0.9583);">天井高</div>
<div class="f" style="left: 189px; top: 670px; font-size: 16px; line-height: 16px; color: rgb(17, 17, 17); --w: 54px; transform: scaleX(0.9489);">地下2階</div>
<div class="f" style="left: 193px; top: 689.3px; font-size: 16px; line-height: 16px; color: rgb(17, 17, 17); --w: 46px; transform: scaleX(0.9583);">天井高</div>
<div class="f" style="left: 283.8px; top: 288px; font-size: 16px; line-height: 16px; color: rgb(242, 242, 242); --w: 31px; transform: scaleX(0.9688);">壁厚</div>
<div class="f" style="left: 349.25px; top: 367.7px; font-size: 16px; line-height: 16px; color: rgb(242, 242, 242); --w: 36.5px; transform: scaleX(0.8923);">2階～</div>
<div class="f" style="left: 352px; top: 386.4px; font-size: 16px; line-height: 16px; color: rgb(242, 242, 242); --w: 31px; transform: scaleX(0.9688);">階高</div>
<div class="f" style="left: 284.8px; top: 455px; font-size: 16px; line-height: 16px; color: rgb(242, 242, 242); --w: 37px; transform: scaleX(0.9045);">2階～</div>
<div class="f" style="left: 287.5px; top: 472.8px; font-size: 16px; line-height: 16px; color: rgb(242, 242, 242); --w: 31px; transform: scaleX(0.9688);">床厚</div>
<div class="f" style="left: 358.5px; top: 458.8px; font-size: 16px; line-height: 16px; color: rgb(242, 242, 242); --w: 20px; transform: scaleX(0.803);">1階</div>
<div class="f" style="left: 352.1px; top: 476.5px; font-size: 16px; line-height: 16px; color: rgb(242, 242, 242); --w: 31px; transform: scaleX(0.9688);">階高</div>
<div class="f" style="left: 216px; top: 535.5px; font-size: 16px; line-height: 16px; color: rgb(242, 242, 242); --w: 46px; transform: scaleX(0.9583);">基礎高</div>
<div class="f" style="left: 293px; top: 531.7px; font-size: 16px; line-height: 16px; color: rgb(242, 242, 242); --w: 51.6px; transform: scaleX(0.9068);">1階床高</div>
<div class="f" style="left: 313px; top: 575.8px; font-size: 16px; line-height: 16px; color: rgb(238, 200, 104); --w: 54px; transform: scaleX(0.9489);">地下1階</div>
<div class="f" style="left: 324.3px; top: 595px; font-size: 16px; line-height: 16px; color: rgb(238, 200, 104); --w: 31px; transform: scaleX(0.9688);">階高</div>
<div class="f" style="left: 313px; top: 658.5px; font-size: 16px; line-height: 16px; color: rgb(238, 200, 104); --w: 54px; transform: scaleX(0.9489);">地下2階</div>
<div class="f" style="left: 324.3px; top: 676.8px; font-size: 16px; line-height: 16px; color: rgb(238, 200, 104); --w: 31px; transform: scaleX(0.9688);">階高</div>
<div class="f" style="left: 408.8px; top: 278.9px; font-size: 15px; line-height: 15px; color: rgb(0, 0, 0); --w: 55px; transform: scaleX(0.9852);">地上(G):</div>
<div style="left:484px;top:273px;width:56px;height:27px;border:1px solid #a0a0a0;border-top-color:#7a7a7a;border-left-color:#7a7a7a;background:#fff;"></div>
<div class="f" style="left: 489px; top: 279px; font-size: 15px; line-height: 15px; color: rgb(0, 0, 0); --w: 8px; transform: scaleX(0.9588);">4</div>
<div style="left:519px;top:275px;width:19px;height:11px;border:1px solid #b8b8b8;background:#ececec;"></div>
<div style="left:519px;top:287px;width:19px;height:11px;border:1px solid #b8b8b8;background:#ececec;"></div>
<svg style="left:523px;top:277px;" width="11" height="7" viewBox="0 0 11 7"><path d="M0.5 6 L5.5 1 L10.5 6Z" fill="#111"></path></svg>
<svg style="left:523px;top:289px;" width="11" height="7" viewBox="0 0 11 7"><path d="M0.5 1 L5.5 6 L10.5 1Z" fill="#111"></path></svg>
<div class="f" style="left: 615px; top: 279.5px; font-size: 15px; line-height: 15px; color: rgb(0, 0, 0); --w: 54.5px; transform: scaleX(1.0061);">地下(B):</div>
<div style="left:684px;top:273px;width:56px;height:27px;border:1px solid #a0a0a0;border-top-color:#7a7a7a;border-left-color:#7a7a7a;background:#fff;"></div>
<div class="f" style="left: 689px; top: 279px; font-size: 15px; line-height: 15px; color: rgb(0, 0, 0); --w: 8px; transform: scaleX(0.9588);">1</div>
<div style="left:719px;top:275px;width:19px;height:11px;border:1px solid #b8b8b8;background:#ececec;"></div>
<div style="left:719px;top:287px;width:19px;height:11px;border:1px solid #b8b8b8;background:#ececec;"></div>
<svg style="left:723px;top:277px;" width="11" height="7" viewBox="0 0 11 7"><path d="M0.5 6 L5.5 1 L10.5 6Z" fill="#111"></path></svg>
<svg style="left:723px;top:289px;" width="11" height="7" viewBox="0 0 11 7"><path d="M0.5 1 L5.5 6 L10.5 1Z" fill="#111"></path></svg>
<div style="left:408px;top:306px;width:440px;height:275px;border:1px solid #828790;background:#fff;"></div>
<div style="left:509px;top:309px;width:1px;height:22px;background:#e5e5e5;"></div>
<div style="left:671px;top:309px;width:1px;height:22px;background:#e5e5e5;"></div>
<div style="left:833px;top:309px;width:1px;height:22px;background:#e5e5e5;"></div>
<svg style="left:409px;top:307px;shape-rendering:crispEdges;" width="438" height="273" viewBox="0 0 438 273"><rect x="0" y="43" width="438" height="1" fill="#f0f0f0"></rect><rect x="0" y="62" width="438" height="1" fill="#f0f0f0"></rect><rect x="0" y="81" width="438" height="1" fill="#f0f0f0"></rect><rect x="0" y="100" width="438" height="1" fill="#f0f0f0"></rect><rect x="0" y="119" width="438" height="1" fill="#f0f0f0"></rect><rect x="0" y="138" width="438" height="1" fill="#f0f0f0"></rect><rect x="0" y="157" width="438" height="1" fill="#f0f0f0"></rect><rect x="0" y="176" width="438" height="1" fill="#f0f0f0"></rect><rect x="0" y="195" width="438" height="1" fill="#f0f0f0"></rect><rect x="0" y="214" width="438" height="1" fill="#f0f0f0"></rect><rect x="0" y="233" width="438" height="1" fill="#f0f0f0"></rect><rect x="0" y="252" width="438" height="1" fill="#f0f0f0"></rect><rect x="101" y="24" width="1" height="249" fill="#f0f0f0"></rect><rect x="263" y="24" width="1" height="249" fill="#f0f0f0"></rect><rect x="425" y="24" width="1" height="249" fill="#f0f0f0"></rect></svg>
<div class="f" style="left: 416.5px; top: 313.3px; font-size: 15px; line-height: 15px; color: rgb(0, 0, 0); --w: 12px; transform: scaleX(0.8);">階</div>
<div class="f" style="left: 583.6px; top: 313.3px; font-size: 15px; line-height: 15px; color: rgb(0, 0, 0); --w: 81.8px; transform: scaleX(1.0227);">天井高(mm)</div>
<div class="f" style="left: 760.2px; top: 313.3px; font-size: 15px; line-height: 15px; color: rgb(0, 0, 0); --w: 67.1px; transform: scaleX(1.0326);">階高(mm)</div>
<div class="f" style="left: 414.6px; top: 334px; font-size: 15px; line-height: 15px; color: rgb(0, 0, 0); --w: 23px; transform: scaleX(0.9853);">4階</div>
<div class="f" style="left: 632.2px; top: 334.7px; font-size: 16px; line-height: 16px; color: rgb(0, 0, 0); --w: 31.6px; transform: scaleX(0.8878);">2700</div>
<div class="f" style="left: 794px; top: 334.7px; font-size: 16px; line-height: 16px; color: rgb(0, 0, 0); --w: 31.7px; transform: scaleX(0.8906);">3200</div>
<div class="f" style="left: 414.6px; top: 353px; font-size: 15px; line-height: 15px; color: rgb(0, 0, 0); --w: 23px; transform: scaleX(0.9853);">3階</div>
<div class="f" style="left: 632.2px; top: 353.7px; font-size: 16px; line-height: 16px; color: rgb(0, 0, 0); --w: 31.6px; transform: scaleX(0.8878);">2700</div>
<div class="f" style="left: 794px; top: 353.7px; font-size: 16px; line-height: 16px; color: rgb(0, 0, 0); --w: 31.7px; transform: scaleX(0.8906);">3200</div>
<div class="f" style="left: 414.6px; top: 372px; font-size: 15px; line-height: 15px; color: rgb(0, 0, 0); --w: 23px; transform: scaleX(0.9853);">2階</div>
<div class="f" style="left: 632.2px; top: 372.7px; font-size: 16px; line-height: 16px; color: rgb(0, 0, 0); --w: 31.6px; transform: scaleX(0.8878);">2700</div>
<div class="f" style="left: 794px; top: 372.7px; font-size: 16px; line-height: 16px; color: rgb(0, 0, 0); --w: 31.7px; transform: scaleX(0.8906);">3200</div>
<div class="f" style="left: 414.6px; top: 391px; font-size: 15px; line-height: 15px; color: rgb(0, 0, 0); --w: 23px; transform: scaleX(0.9853);">1階</div>
<div class="f" style="left: 632.2px; top: 391.7px; font-size: 16px; line-height: 16px; color: rgb(0, 0, 0); --w: 31.6px; transform: scaleX(0.8878);">2700</div>
<div class="f" style="left: 794px; top: 391.7px; font-size: 16px; line-height: 16px; color: rgb(0, 0, 0); --w: 31.7px; transform: scaleX(0.8906);">3200</div>
<div class="f" style="left: 414.6px; top: 410px; font-size: 15px; line-height: 15px; color: rgb(0, 0, 0); --w: 50.6px; transform: scaleX(0.9486);">地下1階</div>
<div class="f" style="left: 632.2px; top: 410.7px; font-size: 16px; line-height: 16px; color: rgb(0, 0, 0); --w: 31.6px; transform: scaleX(0.8878);">2700</div>
<div class="f" style="left: 794px; top: 410.7px; font-size: 16px; line-height: 16px; color: rgb(0, 0, 0); --w: 31.7px; transform: scaleX(0.8906);">3200</div>
<div class="f" style="left: 414.4px; top: 603.3px; font-size: 15px; line-height: 15px; color: rgb(0, 0, 0); --w: 77px; transform: scaleX(1.0043);">1階床高(F):</div>
<div style="left:502px;top:597px;width:68px;height:27px;border:1px solid #7a7a7a;background:#fff;"></div>
<div class="f" style="left: 550.5px; top: 602px; font-size: 15px; line-height: 15px; color: rgb(0, 0, 0); --w: 15.2px; transform: scaleX(0.9109);">50</div>
<div class="f" style="left: 580.3px; top: 603px; font-size: 15px; line-height: 15px; color: rgb(0, 0, 0); --w: 25.3px; transform: scaleX(1.012);">mm</div>
<div class="f" style="left: 632.9px; top: 603.1px; font-size: 15px; line-height: 15px; color: rgb(0, 0, 0); --w: 70.5px; transform: scaleX(1.0071);">基礎高(H):</div>
<div style="left:712px;top:597px;width:67.5px;height:27px;border:1px solid #7a7a7a;background:#fff;"></div>
<div class="f" style="left: 768.6px; top: 602px; font-size: 15px; line-height: 15px; color: rgb(0, 0, 0); --w: 6.3px; transform: scaleX(0.7551);">1</div>
<div class="f" style="left: 790px; top: 603px; font-size: 15px; line-height: 15px; color: rgb(0, 0, 0); --w: 25.7px; transform: scaleX(1.028);">mm</div>
<div class="f" style="left: 414.4px; top: 642.5px; font-size: 15px; line-height: 15px; color: rgb(0, 0, 0); --w: 60.2px; transform: scaleX(1.0321);">壁厚(W):</div>
<div style="left:502px;top:635.5px;width:68px;height:26.5px;border:1px solid #7a7a7a;background:#fff;"></div>
<div class="f" style="left: 542.6px; top: 640.5px; font-size: 15px; line-height: 15px; color: rgb(0, 0, 0); --w: 23.1px; transform: scaleX(0.9228);">100</div>
<div class="f" style="left: 580.3px; top: 642px; font-size: 15px; line-height: 15px; color: rgb(0, 0, 0); --w: 25.3px; transform: scaleX(1.012);">mm</div>
<div style="left:632px;top:638.5px;width:15.5px;height:15.5px;border:1px solid #333;background:#fff;"></div>
<div class="f" style="left: 652.9px; top: 638.7px; font-size: 15px; line-height: 15px; color: rgb(0, 0, 0); --w: 125.7px; transform: scaleX(0.8979);">既定値として保存(S)</div>
<div style="left:414.5px;top:676.5px;width:433.5px;height:76.5px;border:1px solid #dcdcdc;"></div>
<div style="left:421px;top:668px;width:58px;height:16px;background:#f0f0f0;"></div>
<div class="f" style="left: 424px; top: 669.5px; font-size: 15px; line-height: 15px; color: rgb(0, 0, 0); --w: 53.8px; transform: scaleX(0.8967);">高さ設定</div>
<div style="left:421.5px;top:696px;width:16.5px;height:16.5px;border:1px solid #333;border-radius:50%;background:#fff;"></div>
<div style="left:425.5px;top:700px;width:8.5px;height:8.5px;border-radius:50%;background:#333;"></div>
<div class="f" style="left: 442.4px; top: 696.5px; font-size: 15px; line-height: 15px; color: rgb(0, 0, 0); --w: 115.4px; transform: scaleX(0.8293);">建物のワンフロア(F)</div>
<div style="left:613.5px;top:696px;width:16.5px;height:16.5px;border:1px solid #333;border-radius:50%;background:#fff;"></div>
<div class="f" style="left: 634.9px; top: 696.5px; font-size: 15px; line-height: 15px; color: rgb(0, 0, 0); --w: 50.8px; transform: scaleX(0.9994);">戸建(D)</div>
<div style="left:408px;top:713.5px;width:165.5px;height:5px;background:#e8141c;border-radius:3px;"></div>
<div style="left:639px;top:762px;width:98px;height:29.5px;border:2px solid #0078d7;background:#e1e1e1;"></div>
<div class="f" style="left: 678px; top: 769px; font-size: 15px; line-height: 15px; color: rgb(0, 0, 0); --w: 20.5px; transform: scaleX(0.9452);">OK</div>
<div style="left:751px;top:762px;width:98px;height:29.5px;border:1px solid #adadad;background:#e1e1e1;"></div>
<div class="f" style="left: 770px; top: 769.5px; font-size: 15px; line-height: 15px; color: rgb(0, 0, 0); --w: 57px; transform: scaleX(0.76);">キャンセル</div>
<div style="left:0px;top:0px;width:1px;height:962px;background:#a8a8a8;"></div>
<div style="left:1644px;top:0px;width:1px;height:962px;background:#a8a8a8;"></div>
<div style="left:0px;top:0px;width:1645px;height:1px;background:#a8a8a8;"></div>
<div style="left:0px;top:961px;width:1645px;height:1px;background:#a8a8a8;"></div><script>(function(){var els=document.querySelectorAll('.f');var ws=[];for(var i=0;i<els.length;i++){var e=els[i];var w=parseFloat(e.style.getPropertyValue('--w'));ws.push(w);if(w){e.style.transform='none';}}for(var i=0;i<els.length;i++){var e=els[i];var w=ws[i];if(!w)continue;var nw=e.getBoundingClientRect().width;if(nw>0){e.style.transform='scaleX('+(w/nw).toFixed(4)+')';}}})();</script></body></html>
